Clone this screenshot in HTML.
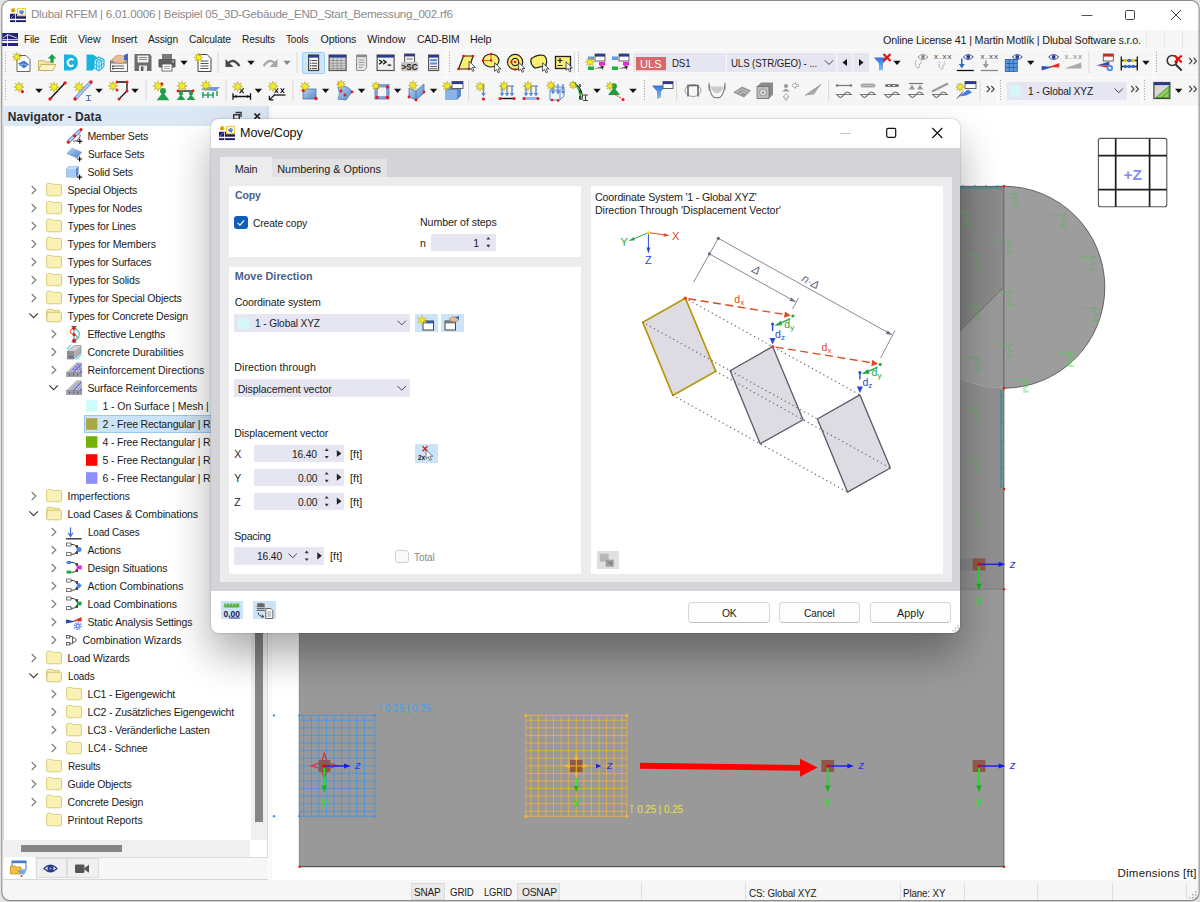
<!DOCTYPE html>
<html><head><meta charset="utf-8"><title>Dlubal RFEM</title>
<style>
html,body{margin:0;padding:0;background:#fff;}
body{width:1200px;height:902px;position:relative;overflow:hidden;font-family:"Liberation Sans",sans-serif;}
.t{position:absolute;white-space:nowrap;line-height:16px;height:16px;transform-origin:0 50%;}
.r{position:absolute;box-sizing:border-box;}
svg{position:absolute;overflow:visible;}
svg text{font-family:"Liberation Sans",sans-serif;}
</style></head><body>
<div class="r" style="left:0.0px;top:0.0px;width:1200.0px;height:30.0px;background:#ffffff;"></div>
<svg style="left:10px;top:7px" width="17" height="16" viewBox="0 0 17 16"><rect x="0" y="6.8" width="16" height="4.9" fill="#1a1a6a"/><rect x="0" y="13.2" width="16" height="1.9" fill="#1a1a6a"/><rect x="5.2" y="6.8" width="0.8" height="8.4" fill="#fff"/><path d="M1 11 L4.6 7.4" stroke="#c8c8e8" stroke-width="0.6"/><circle cx="3.2" cy="3.3" r="2.3" fill="#e4bc1c"/><path d="M3.8 2 Q2.4 2.4 2.6 4 Q3.4 3.2 3.9 4 Q3.6 4.9 2.8 4.4" stroke="#6a5a20" stroke-width="0.5" fill="none"/><rect x="7.6" y="1.5" width="7.7" height="7.2" fill="#fff" stroke="#f5d040" stroke-width="1.2"/><path d="M8.8 4.4 L12 2.8 L14 4.6 L12.6 7.8 L10 6.4 Z" fill="#5a7cc0"/><path d="M10 4.4 L12 3.6 L12.8 5" stroke="#a8c0e8" stroke-width="0.6" fill="none"/></svg>
<span class="t" style="left:31.0px;top:6.1px;font-size:11.60px;color:#8a8a8a;letter-spacing:-0.254px;">Dlubal RFEM | 6.01.0006 | Beispiel 05_3D-Gebäude_END_Start_Bemessung_002.rf6</span>
<svg style="left:1070px;top:5px" width="125" height="22" viewBox="0 0 125 22"><path d="M11.5 10.5 H22.5" stroke="#555" stroke-width="1" fill="none"/><rect x="55.5" y="5.5" width="9" height="9" rx="1.2" fill="none" stroke="#444" stroke-width="1"/><path d="M101 5 L111 15 M111 5 L101 15" stroke="#444" stroke-width="1" fill="none"/></svg>
<div class="r" style="left:0.0px;top:30.0px;width:1200.0px;height:19.0px;background:#f6f6f6;"></div>
<svg style="left:2px;top:33px" width="17" height="13" viewBox="0 0 17 13"><rect x="0" y="0" width="16" height="8" fill="#23237a"/><rect x="0" y="10" width="16" height="3" fill="#23237a"/><path d="M1 5 L5.5 1.5 L5.5 13 M5.5 1.5 L15 5" stroke="#fff" stroke-width="0.8" fill="none"/><rect x="0" y="6.2" width="16" height="1" fill="#fff" opacity="0.9"/></svg>
<span class="t" style="left:23.8px;top:31.2px;font-size:10.70px;color:#1a1a1a;letter-spacing:-0.108px;transform:scaleX(0.9220);">File</span>
<span class="t" style="left:50.0px;top:31.2px;font-size:10.70px;color:#1a1a1a;letter-spacing:-0.115px;transform:scaleX(0.9456);">Edit</span>
<span class="t" style="left:78.0px;top:31.2px;font-size:10.70px;color:#1a1a1a;letter-spacing:-0.125px;">View</span>
<span class="t" style="left:111.5px;top:31.2px;font-size:10.70px;color:#1a1a1a;letter-spacing:-0.210px;">Insert</span>
<span class="t" style="left:148.0px;top:31.2px;font-size:10.70px;color:#1a1a1a;letter-spacing:-0.134px;transform:scaleX(0.9580);">Assign</span>
<span class="t" style="left:189.0px;top:31.2px;font-size:10.70px;color:#1a1a1a;letter-spacing:-0.124px;transform:scaleX(0.9657);">Calculate</span>
<span class="t" style="left:242.0px;top:31.2px;font-size:10.70px;color:#1a1a1a;letter-spacing:-0.127px;transform:scaleX(0.9486);">Results</span>
<span class="t" style="left:286.2px;top:31.2px;font-size:10.70px;color:#1a1a1a;letter-spacing:-0.125px;transform:scaleX(0.9238);">Tools</span>
<span class="t" style="left:320.5px;top:31.2px;font-size:10.70px;color:#1a1a1a;letter-spacing:-0.161px;">Options</span>
<span class="t" style="left:367.2px;top:31.2px;font-size:10.70px;color:#1a1a1a;letter-spacing:0.074px;">Window</span>
<span class="t" style="left:416.5px;top:31.2px;font-size:10.70px;color:#1a1a1a;letter-spacing:-0.161px;transform:scaleX(0.9648);">CAD-BIM</span>
<span class="t" style="left:470.0px;top:31.2px;font-size:10.70px;color:#1a1a1a;letter-spacing:-0.189px;">Help</span>
<span class="t" style="left:883.0px;top:31.5px;font-size:10.80px;color:#1a1a1a;letter-spacing:-0.182px;">Online License 41 | Martin Motlík | Dlubal Software s.r.o.</span>
<div class="r" style="left:1146.3px;top:31.0px;width:1.0px;height:17.0px;background:#e6e6e6;"></div>
<div class="r" style="left:1164.0px;top:31.0px;width:1.0px;height:17.0px;background:#e6e6e6;"></div>
<div class="r" style="left:1182.0px;top:31.0px;width:1.0px;height:17.0px;background:#e6e6e6;"></div>
<div class="r" style="left:0.0px;top:49.0px;width:1200.0px;height:56.5px;background:#f6f6f6;"></div>
<div class="r" style="left:0.0px;top:48.6px;width:1200.0px;height:0.8px;background:#fcfcfc;"></div>
<div class="r" style="left:0.0px;top:76.6px;width:1200.0px;height:0.8px;background:#fdfdfd;"></div>
<div class="r" style="left:446.0px;top:49.0px;width:1.0px;height:28.0px;background:#ffffff;"></div>
<div class="r" style="left:575.5px;top:49.0px;width:1.0px;height:28.0px;background:#ffffff;"></div>
<div class="r" style="left:1153.0px;top:49.0px;width:1.0px;height:28.0px;background:#ffffff;"></div>
<div class="r" style="left:640.5px;top:77.0px;width:1.0px;height:28.5px;background:#ffffff;"></div>
<div class="r" style="left:997.0px;top:77.0px;width:1.0px;height:28.5px;background:#ffffff;"></div>
<div class="r" style="left:1141.0px;top:77.0px;width:1.0px;height:28.5px;background:#ffffff;"></div>
<svg style="left:0;top:0" width="1200" height="106" viewBox="0 0 1200 106">
<defs><linearGradient id="gb" x1="0" x2="1" y1="0" y2="1"><stop offset="0" stop-color="#b8d4f4"/><stop offset="1" stop-color="#5a88c6"/></linearGradient><linearGradient id="gf" x1="0" x2="0" y1="0" y2="1"><stop offset="0" stop-color="#2f74d8"/><stop offset="1" stop-color="#8cc0f4"/></linearGradient></defs>
<path d="M5.5 52.0 v21" stroke="#a4a4a4" stroke-width="1" stroke-dasharray="1 1.7"/>
<g transform="translate(22.0,62.5)"><path d="M-5 -7 H4 L8 -3 V9 H-5 Z" fill="#fff" stroke="#555" stroke-width="0.9"/><path d="M-4 1 L2 -2 L7 2 L2 6 Z" fill="#4a78c8"/><path d="M-3 3 Q1 0 6 3" stroke="#9ab8e8" fill="none" stroke-width="1"/></g><polygon points="17.0,52.4 17.8,55.1 20.3,53.7 18.9,56.2 21.6,57.0 18.9,57.8 20.3,60.3 17.8,58.9 17.0,61.6 16.2,58.9 13.7,60.3 15.1,57.8 12.4,57.0 15.1,56.2 13.7,53.7 16.2,55.1" fill="#f6ee1e" stroke="#a89818" stroke-width="0.5"/>
<g transform="translate(47.0,62.5)"><path d="M-8.5 -2 H-3 L-1.5 -0.5 H6 V8 H-8.5 Z" fill="#f2e6a0" stroke="#b8a858" stroke-width="0.8"/><path d="M-6 2 H9 L6 8 H-8.5 Z" fill="#faf2c0" stroke="#b8a858" stroke-width="0.8"/><path d="M5 -8.5 l4.2 4.5 h-2.6 v4 h-3.2 v-4 h-2.6 Z" fill="#18a048"/></g>
<g transform="translate(70.0,62.5)"><path d="M-6 -8 H0 A8 8 0 0 1 0 8 H-6 Z" fill="#18b4e0"/><path d="M3.5 -2.4 A3.4 3.4 0 1 0 3.5 2.6" fill="none" stroke="#fff" stroke-width="2"/></g>
<g transform="translate(95.0,62.5)"><path d="M-8.5 -8 H-3 A8 8 0 0 1 3 -2 L-2 8 H-8.5 Z" fill="#18b4e0"/><path d="M-1 -3 L4 -5.5 L9 -3 V4 L4 8.5 L-1 5.5 Z" fill="#c8f0fa" stroke="#18a8d8" stroke-width="1"/><path d="M-1 -3 L4 0 L9 -3 M4 0 V8.5 M-1 1.2 L4 4.2 L9 0.6 M1.5 -4.2 L6.5 -1.4 V6.2 M6.5 -4.2 L1.5 -1.4 V7" stroke="#18a8d8" stroke-width="0.8" fill="none"/></g>
<g transform="translate(119.0,62.5)"><rect x="-8.5" y="-1.5" width="17" height="10.5" fill="#f4f4f4" stroke="#555" stroke-width="0.9"/><rect x="-8.5" y="-1.5" width="17" height="2.6" fill="#888"/><path d="M-5 3.5 h10 M-5 6 h10" stroke="#666" stroke-width="1.2"/><rect x="-7" y="3" width="2" height="1.4" fill="#444"/><rect x="-7" y="5.4" width="2" height="1.4" fill="#444"/><path d="M-7 -3 Q-3 -8.5 3 -7 L8 -5 L8 -1 L2 1 L-5 0 Z" fill="#e8bc98" stroke="#a87850" stroke-width="0.5"/><path d="M5 -7.5 L9 -9 V-1.5 L5 -2.5 Z" fill="#3a68c0"/></g>
<g transform="translate(143.0,62.5)"><path d="M-8.5 -8.5 H6.5 L8.5 -6.5 V8.5 H-8.5 Z" fill="#6c6c6c"/><rect x="-5.5" y="-7" width="11" height="7" fill="#f0f0f0"/><path d="M-4 -5 h8 M-4 -3 h8" stroke="#888" stroke-width="1"/><rect x="-4" y="3" width="8" height="5.5" fill="#e8e8e8"/><rect x="-2" y="4" width="2.4" height="4.5" fill="#555"/></g>
<g transform="translate(167.0,62.5)"><rect x="-5" y="-8.5" width="10" height="5" fill="#7a7a7a"/><rect x="-8.5" y="-3.5" width="17" height="8.5" rx="1" fill="#5e5e5e"/><rect x="-5" y="1.5" width="10" height="7" fill="#fff" stroke="#5e5e5e" stroke-width="0.9"/><path d="M-3 4 h6 M-3 6 h6" stroke="#888" stroke-width="0.8"/><circle cx="6" cy="-1" r="0.9" fill="#ddd"/></g>
<path d="M180.3 60.7 h7.4 l-3.7 4.3 Z" fill="#111"/>
<g transform="translate(203.0,62.5)"><path d="M-5 -8 H4 L8 -4 V9 H-5 Z" fill="#fff" stroke="#444" stroke-width="1"/><path d="M-2.5 -1.5 h8 M-2.5 1 h8 M-2.5 3.5 h8 M-2.5 6 h8" stroke="#555" stroke-width="1"/></g><polygon points="198.5,52.9 199.3,55.6 201.8,54.2 200.4,56.7 203.1,57.5 200.4,58.3 201.8,60.8 199.3,59.4 198.5,62.1 197.7,59.4 195.2,60.8 196.6,58.3 193.9,57.5 196.6,56.7 195.2,54.2 197.7,55.6" fill="#f6ee1e" stroke="#a89818" stroke-width="0.5"/>
<path d="M218.0 52.0 v21" stroke="#dadada" stroke-width="1"/>
<g transform="translate(233.0,62.5)"><path d="M-5.5 1.5 Q0 -5.5 6.5 3.5" fill="none" stroke="#4a4a4a" stroke-width="2.3"/><path d="M-7.5 -3.5 v8 h8 Z" fill="#4a4a4a"/></g>
<path d="M247.3 60.7 h7.4 l-3.7 4.3 Z" fill="#111"/>
<g transform="translate(270.0,62.5)"><path d="M5.5 1.5 Q0 -5.5 -6.5 3.5" fill="none" stroke="#a8a8a8" stroke-width="2.3"/><path d="M7.5 -3.5 v8 h-8 Z" fill="#a8a8a8"/></g>
<path d="M283.3 60.7 h7.4 l-3.7 4.3 Z" fill="#888"/>
<path d="M297.0 52.0 v21" stroke="#dadada" stroke-width="1"/>
<rect x="302.5" y="52.5" width="22" height="21" rx="2" fill="#cfe6fa" stroke="#9cccf4" stroke-width="1"/>
<g transform="translate(313.6,62.5)"><rect x="-5" y="-7.5" width="10" height="15.5" fill="#f4f4f4" stroke="#444" stroke-width="1.2"/><rect x="-5" y="-7.5" width="10" height="2.6" fill="#2a3a90"/><path d="M-2 -2 h5.5 M-2 0.7 h5.5 M-2 3.4 h5.5 M-2 6 h5.5" stroke="#555" stroke-width="1.1"/><path d="M-3.6 -2 h0.9 M-3.6 0.7 h0.9 M-3.6 3.4 h0.9 M-3.6 6 h0.9" stroke="#222" stroke-width="1.1"/></g>
<g transform="translate(337.6,62.5)"><rect x="-8.5" y="-7.5" width="17" height="15.5" fill="#d4d4d4" stroke="#555" stroke-width="1.2"/><rect x="-8.5" y="-7.5" width="17" height="2.6" fill="#2a3a90"/><path d="M-8 -2 h16 M-8 0.7 h16 M-8 3.4 h16 M-8 6 h16 M-4.5 -4.5 v12 M-0.5 -4.5 v12 M3.5 -4.5 v12" stroke="#8a8a8a" stroke-width="0.8"/></g>
<g transform="translate(361.6,62.5)"><path d="M-5 -7.5 H5 V5 L2.5 8 H-5 Z" fill="#e8e8e8" stroke="#8a8a8a" stroke-width="1"/><rect x="-5" y="-7.5" width="10" height="2.2" fill="#8a8a8a"/><path d="M-3 -2.5 h6 M-3 0 h6 M-3 2.5 h6 M-3 5 h4" stroke="#999" stroke-width="1"/></g>
<g transform="translate(385.6,62.5)"><rect x="-8.5" y="-7.5" width="17" height="15.5" fill="#f0f0f0" stroke="#555" stroke-width="1.2"/><rect x="-8.5" y="-7.5" width="17" height="2.6" fill="#2a3a90"/><path d="M-6.5 -2.6 l3 2.2 l-3 2.2 M-2.5 -2.6 l3 2.2 l-3 2.2 M2 2.6 h3.6" fill="none" stroke="#111" stroke-width="1.3"/></g>
<g transform="translate(409.6,62.5)"><rect x="-5" y="-8.5" width="10" height="10" fill="#f0f0f0" stroke="#555" stroke-width="1"/><rect x="-5" y="-8.5" width="10" height="2.4" fill="#2a3a90"/><path d="M-3 -3.5 h6" stroke="#777" stroke-width="1"/><rect x="-8.8" y="-0.6" width="17.6" height="9.4" rx="2.2" fill="#c6c6c6"/><text x="-8" y="7.4" font-size="9.4" font-weight="bold" fill="#1a1a1a" textLength="16" lengthAdjust="spacingAndGlyphs">&gt;SC</text></g>
<g transform="translate(433.6,62.5)"><rect x="-5" y="-7.5" width="10" height="15.5" fill="#f4f4f4" stroke="#555" stroke-width="1.2"/><rect x="-5" y="-7.5" width="10" height="2.6" fill="#2a3a90"/><rect x="-3.5" y="-3.3" width="7" height="2" fill="#5a8ad8"/><rect x="-3.5" y="0" width="7" height="2" fill="#5a8ad8"/><path d="M-3.5 4 h7 M-3.5 6.2 h7" stroke="#666" stroke-width="1"/></g>
<path d="M449.5 52.0 v21" stroke="#a4a4a4" stroke-width="1" stroke-dasharray="1 1.7"/>
<g transform="translate(467.0,62.5)"><path d="M-3.5 -6.5 H6 L2 6.5 H-8.5 Z" fill="#f8ee70" stroke="#222" stroke-width="1.2"/><circle cx="-3.5" cy="-6.5" r="1.3" fill="#e81818"/><circle cx="6.0" cy="-6.5" r="1.3" fill="#e81818"/><circle cx="-8.5" cy="6.5" r="1.3" fill="#e81818"/><circle cx="2.0" cy="6.5" r="1.3" fill="#e81818"/><path d="M2.1 -1.1 v8.4 l2 -1.8 l1.5 3.3 l1.5 -0.7 l-1.5 -3.2 h2.8 Z" fill="#fff" stroke="#222" stroke-width="0.75"/></g>
<g transform="translate(491.0,62.5)"><ellipse cx="0" cy="-2" rx="8" ry="6.5" fill="#f8ee70" stroke="#222" stroke-width="1.2"/><path d="M-7 -2 h7 M0 -8 v7" stroke="#e81818" stroke-width="0.7"/><circle cx="-8.0" cy="-2.0" r="1.2" fill="#e81818"/><circle cx="0.0" cy="-8.5" r="1.2" fill="#e81818"/><circle cx="0.0" cy="-2.0" r="1.2" fill="#e81818"/><path d="M3.6 0.4 v8.4 l2 -1.8 l1.5 3.3 l1.5 -0.7 l-1.5 -3.2 h2.8 Z" fill="#fff" stroke="#222" stroke-width="0.75"/></g>
<g transform="translate(515.6,62.5)"><circle cx="-0.5" cy="-0.5" r="7.6" fill="#f8ee70" stroke="#222" stroke-width="1.2"/><circle cx="-0.5" cy="-0.5" r="3.6" fill="#f8ee70" stroke="#222" stroke-width="1.1"/><circle cx="-4.3" cy="-0.5" r="1.2" fill="#e81818"/><circle cx="-0.5" cy="-0.5" r="1.2" fill="#e81818"/><circle cx="-0.5" cy="7.0" r="1.2" fill="#e81818"/><path d="M3.1 -0.1 v8.4 l2 -1.8 l1.5 3.3 l1.5 -0.7 l-1.5 -3.2 h2.8 Z" fill="#fff" stroke="#222" stroke-width="0.75"/></g>
<g transform="translate(539.0,62.5)"><path d="M-8 -3.5 Q-2 -8.5 5 -7 Q9 -4 7 3 L-4 5.5 Q-9 2 -8 -3.5 Z" fill="#f8ee70" stroke="#222" stroke-width="1.2"/><path d="M3.6 0.4 v8.4 l2 -1.8 l1.5 3.3 l1.5 -0.7 l-1.5 -3.2 h2.8 Z" fill="#fff" stroke="#222" stroke-width="0.75"/></g>
<g transform="translate(563.0,62.5)"><rect x="-7.5" y="-6" width="15" height="12" fill="#f8ee70" stroke="#222" stroke-width="1.3"/><path d="M-5.5 -2 h5 M-3 -4.5 v5 M-5.5 3 h5" stroke="#222" stroke-width="1.2"/><path d="M3.1 -0.6 v8.4 l2 -1.8 l1.5 3.3 l1.5 -0.7 l-1.5 -3.2 h2.8 Z" fill="#fff" stroke="#222" stroke-width="0.75"/></g>
<path d="M574.4 52.0 v21" stroke="#dadada" stroke-width="1"/>
<path d="M578.5 52.0 v21" stroke="#a4a4a4" stroke-width="1" stroke-dasharray="1 1.7"/>
<g transform="translate(596.0,62.5)"><rect x="-8" y="-6" width="6" height="3.5" fill="#5a9af0"/><rect x="-8" y="4" width="6" height="3.5" fill="#20b040"/><rect x="3" y="-0.5" width="6" height="3.5" fill="#f020e0"/><path d="M-2 6 L5 4.5 L4 3 L8 3.5 L6.5 7.5 L5.8 5.8 Z" fill="#333"/><rect x="-1.0" y="-8.5" width="10.0" height="7.0" fill="#fff" stroke="#555" stroke-width="0.9"/><rect x="-1.0" y="-8.5" width="10.0" height="2.6" fill="#2a3a90"/></g>
<polygon points="590.0,57.4 590.8,60.1 593.3,58.7 591.9,61.2 594.6,62.0 591.9,62.8 593.3,65.3 590.8,63.9 590.0,66.6 589.2,63.9 586.7,65.3 588.1,62.8 585.4,62.0 588.1,61.2 586.7,58.7 589.2,60.1" fill="#f6ee1e" stroke="#a89818" stroke-width="0.5"/>
<g transform="translate(620.0,62.5)"><rect x="-8" y="-6" width="6" height="3.5" fill="#5a9af0"/><rect x="-8" y="4" width="6" height="3.5" fill="#20b040"/><rect x="3" y="-0.5" width="6" height="3.5" fill="#f020e0"/><path d="M-2 6 L5 4.5 L4 3 L8 3.5 L6.5 7.5 L5.8 5.8 Z" fill="#333"/><rect x="-1.0" y="-8.5" width="10.0" height="7.0" fill="#fff" stroke="#555" stroke-width="0.9"/><rect x="-1.0" y="-8.5" width="10.0" height="2.6" fill="#2a3a90"/></g>
<rect x="633" y="53" width="203" height="19" fill="#e6e6f2"/>
<rect x="636" y="57" width="30" height="13.2" fill="#d46a6a"/>
<path d="M726.4 54 v17" stroke="#f6f6fb" stroke-width="1.2"/>
<path d="M824.8 60.3 l4.2 4.2 l4.2 -4.2" fill="none" stroke="#444" stroke-width="1"/>
<rect x="837.2" y="53" width="15" height="19" fill="#e6e6f2"/><rect x="853.2" y="53" width="15.8" height="19" fill="#e6e6f2"/>
<path d="M847 59 v7 l-4.6 -3.5 Z" fill="#111"/><path d="M859 59 v7 l4.6 -3.5 Z" fill="#111"/>
<g transform="translate(882.0,62.5)"><path d="M-8 -5 H6 L1 1 V7 L-3 8.5 V1 Z" fill="url(#gf)"/><path d="M1.5 -8.5 l7 7 M8.5 -8.5 l-7 7" stroke="#e81010" stroke-width="2.2"/></g>
<path d="M893.3 60.7 h7.4 l-3.7 4.3 Z" fill="#111"/>
<g transform="translate(920.0,62.5)"><path d="M-2.0 -5.5 q5 -5 10 0 q-5 5 -10 0 Z" fill="#fff" stroke="#888" stroke-width="0.9"/><circle cx="3.0" cy="-5.5" r="1.9" fill="#888"/><path d="M-4 -2 q-2 5 2 8 q2 -1 1 -4 q3 -1 2 -4" fill="none" stroke="#888" stroke-width="0.9" stroke-dasharray="1.5 1"/></g>
<g transform="translate(942.7,62.5)"><text x="-8.7" y="-3.5" font-size="8" fill="#444" textLength="17.5" lengthAdjust="spacing">x.xx</text><path d="M-3 -1 q-2 5 2 8 q2 -1 1 -4 q3 -1 2 -4" fill="none" stroke="#888" stroke-width="0.9" stroke-dasharray="1.5 1"/></g>
<g transform="translate(965.3,62.5)"><path d="M-2.0 -5.5 q5 -5 10 0 q-5 5 -10 0 Z" fill="#fff" stroke="#2a3a90" stroke-width="0.9"/><circle cx="3.0" cy="-5.5" r="1.9" fill="#2a3a90"/><path d="M-3.5 -4 v8" stroke="#3a6ac8" stroke-width="1.6"/><path d="M-6.5 1.5 h6 l-3 4.5 Z" fill="#3a6ac8"/><path d="M-8.5 8 h17" stroke="#111" stroke-width="1.3"/></g>
<g transform="translate(989.3,62.5)"><text x="-8.7" y="-3.5" font-size="8" fill="#444" textLength="17.5" lengthAdjust="spacing">x.xx</text><path d="M-3.5 -2 v6" stroke="#999" stroke-width="1.6"/><path d="M-6.5 1.5 h6 l-3 4.5 Z" fill="#999"/><path d="M-8.5 8 h17" stroke="#888" stroke-width="1.3"/></g>
<g transform="translate(1013.3,62.5)"><rect x="-8" y="-3" width="12" height="12" fill="#5a9ae0" stroke="#2a5aa8" stroke-width="0.8"/><path d="M-8 1 h12 M-8 5 h12 M-4 -3 v12 M0 -3 v12" stroke="#2a5aa8" stroke-width="0.8"/><path d="M-1.0 -5.5 q5 -5 10 0 q-5 5 -10 0 Z" fill="#fff" stroke="#2a3a90" stroke-width="0.9"/><circle cx="4.0" cy="-5.5" r="1.9" fill="#2a3a90"/></g>
<path d="M1027.0 60.7 h7.4 l-3.7 4.3 Z" fill="#111"/>
<g transform="translate(1050.7,62.5)"><path d="M-2.0 -5.5 q5 -5 10 0 q-5 5 -10 0 Z" fill="#fff" stroke="#2a3a90" stroke-width="0.9"/><circle cx="3.0" cy="-5.5" r="1.9" fill="#2a3a90"/><path d="M-9 3.4 L2 4.6 L-9 8 Z" fill="#2a50b0"/><path d="M-2 4.4 L8.6 0.6 V5 Z" fill="#e03020"/></g>
<g transform="translate(1073.3,62.5)"><text x="-8.7" y="-3.5" font-size="8" fill="#888" textLength="17.5" lengthAdjust="spacing">x.xx</text><path d="M-9 6 L8 0 V6 Z" fill="#aaa"/></g>
<path d="M1088.8 52.0 v21" stroke="#dadada" stroke-width="1"/>
<g transform="translate(1105.3,62.5)"><rect x="-2.0" y="-8.5" width="10.0" height="7.0" fill="#fff" stroke="#555" stroke-width="0.9"/><rect x="-2.0" y="-8.5" width="10.0" height="2.6" fill="#e02020"/><path d="M-9 3 L4 -1 V3 Z" fill="#2a50b0"/><path d="M-9 3 L4 3 V5.5 Z" fill="#e02020"/><circle cx="4.5" cy="5.5" r="3.2" fill="#5a8ae8"/><circle cx="4.5" cy="5.5" r="1.2" fill="#fff"/></g>
<g transform="translate(1129.3,62.5)"><path d="M-8 -6 v14 M8 -6 v14 M-8 -2 h16 M-8 4 h16" stroke="#222" stroke-width="1.4"/><circle cx="-4" cy="-2" r="1.8" fill="#e8c020"/><circle cx="0" cy="-2" r="1.8" fill="#3a6ac8"/><circle cx="4" cy="-2" r="1.8" fill="#e8c020"/><circle cx="-4" cy="4" r="1.8" fill="#3a6ac8"/><circle cx="0" cy="4" r="1.8" fill="#3a6ac8"/><circle cx="4" cy="4" r="1.8" fill="#3a6ac8"/></g>
<path d="M1142.2 60.7 h7.4 l-3.7 4.3 Z" fill="#111"/>
<path d="M1156.5 52.0 v21" stroke="#a4a4a4" stroke-width="1" stroke-dasharray="1 1.7"/>
<g transform="translate(1174.7,62.5)"><circle cx="-2.5" cy="-2" r="5" fill="none" stroke="#333" stroke-width="1.6"/><path d="M1 2 L7 8" stroke="#333" stroke-width="2"/><path d="M0 -7 l7 7 M7 -7 l-7 7" stroke="#e81010" stroke-width="2.2"/></g>
<path d="M1189.2 57.8 l2.8 3.2 l-2.8 3.2 M1193.6 57.8 l2.8 3.2 l-2.8 3.2" fill="none" stroke="#444" stroke-width="1.2"/>
<path d="M5.5 80.0 v21" stroke="#a4a4a4" stroke-width="1" stroke-dasharray="1 1.7"/>
<polygon points="19.0,81.8 19.9,84.8 22.7,83.3 21.2,86.1 24.2,87.0 21.2,87.9 22.7,90.7 19.9,89.2 19.0,92.2 18.1,89.2 15.3,90.7 16.8,87.9 13.8,87.0 16.8,86.1 15.3,83.3 18.1,84.8" fill="#f6ee1e" stroke="#a89818" stroke-width="0.5"/><circle cx="22.4" cy="91.6" r="1.6" fill="#e81818"/>
<path d="M35.3 88.7 h7.4 l-3.7 4.3 Z" fill="#111"/>
<path d="M50 99 L65 83" stroke="#111" stroke-width="1.5"/><circle cx="50.0" cy="99.0" r="1.7" fill="#e81818"/><circle cx="65.0" cy="83.0" r="1.7" fill="#e81818"/><polygon points="54.0,81.8 54.9,84.8 57.7,83.3 56.2,86.1 59.2,87.0 56.2,87.9 57.7,90.7 54.9,89.2 54.0,92.2 53.1,89.2 50.3,90.7 51.8,87.9 48.8,87.0 51.8,86.1 50.3,83.3 53.1,84.8" fill="#f6ee1e" stroke="#a89818" stroke-width="0.5"/>
<path d="M75 99 L91 82" stroke="#7a9ad8" stroke-width="3.6"/><path d="M75 99 L91 82" stroke="#c0d0f0" stroke-width="1.4"/><circle cx="75.0" cy="99.0" r="1.7" fill="#e81818"/><circle cx="91.0" cy="82.0" r="1.7" fill="#e81818"/><polygon points="79.0,81.8 79.9,84.8 82.7,83.3 81.2,86.1 84.2,87.0 81.2,87.9 82.7,90.7 79.9,89.2 79.0,92.2 78.1,89.2 75.3,90.7 76.8,87.9 73.8,87.0 76.8,86.1 75.3,83.3 78.1,84.8" fill="#f6ee1e" stroke="#a89818" stroke-width="0.5"/><path d="M86 95.5 h5 M86 100.5 h5 M88.5 95.5 v5" stroke="#5a7ac0" stroke-width="1.2"/>
<path d="M95.3 88.7 h7.4 l-3.7 4.3 Z" fill="#111"/>
<path d="M117 82 H127 V91 L119 99" fill="none" stroke="#111" stroke-width="1.3"/><circle cx="117.0" cy="82.0" r="1.5" fill="#e81818"/><circle cx="127.0" cy="82.0" r="1.5" fill="#e81818"/><circle cx="127.0" cy="91.0" r="1.5" fill="#e81818"/><circle cx="119.0" cy="99.0" r="1.5" fill="#e81818"/><circle cx="117.0" cy="90.0" r="1.5" fill="#e81818"/><polygon points="113.0,81.2 113.8,84.0 116.4,82.6 115.0,85.2 117.8,86.0 115.0,86.8 116.4,89.4 113.8,88.0 113.0,90.8 112.2,88.0 109.6,89.4 111.0,86.8 108.2,86.0 111.0,85.2 109.6,82.6 112.2,84.0" fill="#f6ee1e" stroke="#a89818" stroke-width="0.5"/>
<path d="M131.3 88.7 h7.4 l-3.7 4.3 Z" fill="#111"/>
<path d="M146.0 80.0 v21" stroke="#dadada" stroke-width="1"/>
<g transform="translate(163.0,94.5) scale(1.15)"><circle cx="0" cy="-3" r="2.6" fill="#1ea048"/><path d="M0 -2 L5.5 5 H-5.5 Z" fill="#1ea048"/></g><polygon points="158.0,80.8 158.9,83.8 161.7,82.3 160.2,85.1 163.2,86.0 160.2,86.9 161.7,89.7 158.9,88.2 158.0,91.2 157.1,88.2 154.3,89.7 155.8,86.9 152.8,86.0 155.8,85.1 154.3,82.3 157.1,83.8" fill="#f6ee1e" stroke="#a89818" stroke-width="0.5"/><circle cx="162.0" cy="84.0" r="1.4" fill="#e81818"/>
<path d="M178 91 h15" stroke="#111" stroke-width="1.3"/><g transform="translate(181.0,96.0) scale(0.80)"><circle cx="0" cy="-3" r="2.6" fill="#1ea048"/><path d="M0 -2 L5.5 5 H-5.5 Z" fill="#1ea048"/></g><g transform="translate(191.0,96.0) scale(0.80)"><circle cx="0" cy="-3" r="2.6" fill="#1ea048"/><path d="M0 -2 L5.5 5 H-5.5 Z" fill="#1ea048"/></g><circle cx="178.0" cy="91.0" r="1.4" fill="#e81818"/><circle cx="193.0" cy="91.0" r="1.4" fill="#e81818"/><polygon points="182.0,80.8 182.9,83.8 185.7,82.3 184.2,85.1 187.2,86.0 184.2,86.9 185.7,89.7 182.9,88.2 182.0,91.2 181.1,88.2 178.3,89.7 179.8,86.9 176.8,86.0 179.8,85.1 178.3,82.3 181.1,83.8" fill="#f6ee1e" stroke="#a89818" stroke-width="0.5"/>
<path d="M201 90 L206 87 H220 L216 91 Z" fill="#6a9ad8"/><path d="M203 92 v6 M208 92 v6 M213 92 v6 M217 91 v5 M202 95 h12" stroke="#30a868" stroke-width="1.6"/><polygon points="206.0,80.3 206.9,83.3 209.7,81.8 208.2,84.6 211.2,85.5 208.2,86.4 209.7,89.2 206.9,87.7 206.0,90.7 205.1,87.7 202.3,89.2 203.8,86.4 200.8,85.5 203.8,84.6 202.3,81.8 205.1,83.3" fill="#f6ee1e" stroke="#a89818" stroke-width="0.5"/>
<path d="M226.0 80.0 v21" stroke="#dadada" stroke-width="1"/>
<path d="M233 93.3 v6.4 M250.5 93.3 v6.4 M233 96.5 h17.5" stroke="#111" stroke-width="1.3"/><path d="M233.6 96.5 l3 -1.6 v3.2 Z M249.9 96.5 l-3 -1.6 v3.2 Z" fill="#111"/><path d="M239.6 88.4 l4 4.8 M243.6 88.4 l-4 4.8" stroke="#111" stroke-width="1.1"/><polygon points="237.6,81.4 238.5,84.4 241.3,82.9 239.8,85.7 242.8,86.6 239.8,87.5 241.3,90.3 238.5,88.8 237.6,91.8 236.7,88.8 233.9,90.3 235.4,87.5 232.4,86.6 235.4,85.7 233.9,82.9 236.7,84.4" fill="#f6ee1e" stroke="#a89818" stroke-width="0.5"/>
<path d="M254.7 88.7 h7.4 l-3.7 4.3 Z" fill="#111"/>
<path d="M273.5 95 h12" stroke="#111" stroke-width="1.3"/><path d="M274.5 95 l-5 4.6 M269.3 99.8 h4 M269.3 99.8 v-4" stroke="#111" stroke-width="1.2" fill="none"/><path d="M274.6 88.4 l3.6 4.6 M278.2 88.4 l-3.6 4.6 M280.6 88.4 l3.6 4.6 M284.2 88.4 l-3.6 4.6" stroke="#111" stroke-width="1.1"/><polygon points="273.0,81.2 273.9,84.2 276.7,82.7 275.2,85.5 278.2,86.4 275.2,87.3 276.7,90.1 273.9,88.6 273.0,91.6 272.1,88.6 269.3,90.1 270.8,87.3 267.8,86.4 270.8,85.5 269.3,82.7 272.1,84.2" fill="#f6ee1e" stroke="#a89818" stroke-width="0.5"/>
<path d="M293.0 80.0 v21" stroke="#dadada" stroke-width="1"/>
<rect x="303" y="89" width="13" height="10" fill="url(#gb)" stroke="#3a6ab0" stroke-width="0.7"/><circle cx="303.5" cy="90.5" r="1.7" fill="#e81818"/><circle cx="316.0" cy="98.5" r="1.7" fill="#e81818"/><polygon points="305.0,81.5 305.9,84.4 308.5,83.0 307.1,85.6 310.0,86.5 307.1,87.4 308.5,90.0 305.9,88.6 305.0,91.5 304.1,88.6 301.5,90.0 302.9,87.4 300.0,86.5 302.9,85.6 301.5,83.0 304.1,84.4" fill="#f6ee1e" stroke="#a89818" stroke-width="0.5"/>
<path d="M321.9 88.7 h7.4 l-3.7 4.3 Z" fill="#111"/>
<path d="M338 87 Q348 84 352 92 Q348 97 346 100 L338 99 Q341 94 338 87 Z" fill="url(#gb)" stroke="#3a6ab0" stroke-width="0.7"/><circle cx="339.0" cy="84.0" r="1.4" fill="#e81818"/><circle cx="341.0" cy="91.0" r="1.4" fill="#e81818"/><circle cx="345.0" cy="95.0" r="1.4" fill="#e81818"/><circle cx="352.0" cy="92.0" r="1.4" fill="#e81818"/><polygon points="341.0,79.9 341.8,82.6 344.3,81.2 342.9,83.7 345.6,84.5 342.9,85.3 344.3,87.8 341.8,86.4 341.0,89.1 340.2,86.4 337.7,87.8 339.1,85.3 336.4,84.5 339.1,83.7 337.7,81.2 340.2,82.6" fill="#f6ee1e" stroke="#a89818" stroke-width="0.5"/>
<path d="M357.9 88.7 h7.4 l-3.7 4.3 Z" fill="#111"/>
<rect x="376.4" y="86" width="11.2" height="11.6" fill="none" stroke="#7aa2d8" stroke-width="3"/><rect x="374.9" y="84.5" width="14.2" height="14.6" fill="none" stroke="#4a74b4" stroke-width="0.5"/><circle cx="377.0" cy="87.0" r="1.7" fill="#e81818"/><circle cx="387.4" cy="87.0" r="1.7" fill="#e81818"/><circle cx="377.0" cy="97.4" r="1.7" fill="#e81818"/><circle cx="387.4" cy="97.4" r="1.7" fill="#e81818"/><polygon points="376.0,81.6 376.8,84.2 379.1,82.9 377.8,85.2 380.4,86.0 377.8,86.8 379.1,89.1 376.8,87.8 376.0,90.4 375.2,87.8 372.9,89.1 374.2,86.8 371.6,86.0 374.2,85.2 372.9,82.9 375.2,84.2" fill="#f6ee1e" stroke="#a89818" stroke-width="0.5"/>
<path d="M393.9 88.7 h7.4 l-3.7 4.3 Z" fill="#111"/>
<path d="M409 88 L416 91 L424 84 V93 L416 100 L409 97 Z" fill="url(#gb)" stroke="#3a6ab0" stroke-width="0.7"/><path d="M416 91 V100" stroke="#3a6ab0" stroke-width="0.7"/><circle cx="409.0" cy="97.0" r="1.4" fill="#e81818"/><circle cx="416.0" cy="100.0" r="1.4" fill="#e81818"/><circle cx="424.0" cy="92.0" r="1.4" fill="#e81818"/><polygon points="413.0,80.7 413.8,83.5 416.4,82.1 415.0,84.7 417.8,85.5 415.0,86.3 416.4,88.9 413.8,87.5 413.0,90.3 412.2,87.5 409.6,88.9 411.0,86.3 408.2,85.5 411.0,84.7 409.6,82.1 412.2,83.5" fill="#f6ee1e" stroke="#a89818" stroke-width="0.5"/>
<path d="M429.9 88.7 h7.4 l-3.7 4.3 Z" fill="#111"/>
<path d="M445 90 L449 86 H461 V96 L457 100 H445 Z" fill="#5a8ad0"/><rect x="445" y="90" width="12" height="10" fill="#8ab4e8"/><g transform="translate(453.0,90.5)"><rect x="-1.0" y="-9.0" width="11.0" height="7.0" fill="#fff" stroke="#555" stroke-width="0.9"/><rect x="-1.0" y="-9.0" width="11.0" height="2.6" fill="#2a3a90"/></g><polygon points="447.0,81.2 447.8,84.0 450.4,82.6 449.0,85.2 451.8,86.0 449.0,86.8 450.4,89.4 447.8,88.0 447.0,90.8 446.2,88.0 443.6,89.4 445.0,86.8 442.2,86.0 445.0,85.2 443.6,82.6 446.2,84.0" fill="#f6ee1e" stroke="#a89818" stroke-width="0.5"/>
<path d="M468.6 80.0 v21" stroke="#dadada" stroke-width="1"/>
<path d="M483.5 84.0 V94.0" stroke="#5a8ad0" stroke-width="1.4"/><path d="M481.3 93.0 h4.4 l-2.2 3.4 Z" fill="#5a8ad0"/><circle cx="483.5" cy="99.0" r="1.6" fill="#e81818"/><polygon points="480.0,81.7 480.8,84.5 483.4,83.1 482.0,85.7 484.8,86.5 482.0,87.3 483.4,89.9 480.8,88.5 480.0,91.3 479.2,88.5 476.6,89.9 478.0,87.3 475.2,86.5 478.0,85.7 476.6,83.1 479.2,84.5" fill="#f6ee1e" stroke="#a89818" stroke-width="0.5"/>
<path d="M500 86 h14" stroke="#5a8ad0" stroke-width="1.2"/><path d="M502.0 86.0 V94.0" stroke="#5a8ad0" stroke-width="1.4"/><path d="M499.8 93.0 h4.4 l-2.2 3.4 Z" fill="#5a8ad0"/><path d="M507.0 86.0 V94.0" stroke="#5a8ad0" stroke-width="1.4"/><path d="M504.8 93.0 h4.4 l-2.2 3.4 Z" fill="#5a8ad0"/><path d="M512.0 86.0 V94.0" stroke="#5a8ad0" stroke-width="1.4"/><path d="M509.8 93.0 h4.4 l-2.2 3.4 Z" fill="#5a8ad0"/><path d="M500 98.5 h14" stroke="#111" stroke-width="1.4"/><circle cx="500.0" cy="98.5" r="1.5" fill="#e81818"/><circle cx="514.0" cy="98.5" r="1.5" fill="#e81818"/><polygon points="504.0,81.2 504.8,84.0 507.4,82.6 506.0,85.2 508.8,86.0 506.0,86.8 507.4,89.4 504.8,88.0 504.0,90.8 503.2,88.0 500.6,89.4 502.0,86.8 499.2,86.0 502.0,85.2 500.6,82.6 503.2,84.0" fill="#f6ee1e" stroke="#a89818" stroke-width="0.5"/>
<path d="M524 86 h14" stroke="#5a8ad0" stroke-width="1.2"/><path d="M526.0 86.0 V94.0" stroke="#5a8ad0" stroke-width="1.4"/><path d="M523.8 93.0 h4.4 l-2.2 3.4 Z" fill="#5a8ad0"/><path d="M531.0 86.0 V94.0" stroke="#5a8ad0" stroke-width="1.4"/><path d="M528.8 93.0 h4.4 l-2.2 3.4 Z" fill="#5a8ad0"/><path d="M536.0 86.0 V94.0" stroke="#5a8ad0" stroke-width="1.4"/><path d="M533.8 93.0 h4.4 l-2.2 3.4 Z" fill="#5a8ad0"/><path d="M524 98.5 h14" stroke="#9ab8e8" stroke-width="3"/><circle cx="524.0" cy="98.5" r="1.5" fill="#e81818"/><circle cx="538.0" cy="98.5" r="1.5" fill="#e81818"/><polygon points="528.0,81.2 528.8,84.0 531.4,82.6 530.0,85.2 532.8,86.0 530.0,86.8 531.4,89.4 528.8,88.0 528.0,90.8 527.2,88.0 524.6,89.4 526.0,86.8 523.2,86.0 526.0,85.2 524.6,82.6 527.2,84.0" fill="#f6ee1e" stroke="#a89818" stroke-width="0.5"/>
<path d="M550 90 l4 -3 h10 v9 l-4 4 h-10 Z M550 90 h10 v10 M560 90 l4 -3" fill="none" stroke="#5a8ad0" stroke-width="1"/><path d="M553.0 84.0 V92.0" stroke="#5a8ad0" stroke-width="1.4"/><path d="M550.8 91.0 h4.4 l-2.2 3.4 Z" fill="#5a8ad0"/><path d="M558.0 84.0 V92.0" stroke="#5a8ad0" stroke-width="1.4"/><path d="M555.8 91.0 h4.4 l-2.2 3.4 Z" fill="#5a8ad0"/><path d="M563.0 84.0 V92.0" stroke="#5a8ad0" stroke-width="1.4"/><path d="M560.8 91.0 h4.4 l-2.2 3.4 Z" fill="#5a8ad0"/><circle cx="552.0" cy="100.0" r="1.3" fill="#e81818"/><circle cx="558.0" cy="100.5" r="1.3" fill="#e81818"/><polygon points="551.0,80.9 551.8,83.6 554.3,82.2 552.9,84.7 555.6,85.5 552.9,86.3 554.3,88.8 551.8,87.4 551.0,90.1 550.2,87.4 547.7,88.8 549.1,86.3 546.4,85.5 549.1,84.7 547.7,82.2 550.2,83.6" fill="#f6ee1e" stroke="#a89818" stroke-width="0.5"/>
<path d="M573 82 Q582 90 580 100" fill="none" stroke="#30b040" stroke-width="1.8"/><path d="M575 83 Q584 90 582 100" fill="none" stroke="#111" stroke-width="1"/><path d="M580 84 v3 M580 90 v3 M580 96 v3" stroke="#111" stroke-width="1.2"/><path d="M583 95 h5 M583 100.5 h5 M585.5 95 v5.5" stroke="#444" stroke-width="1.1"/><polygon points="573.0,80.8 573.7,83.3 576.0,82.0 574.7,84.3 577.2,85.0 574.7,85.7 576.0,88.0 573.7,86.7 573.0,89.2 572.3,86.7 570.0,88.0 571.3,85.7 568.8,85.0 571.3,84.3 570.0,82.0 572.3,83.3" fill="#f6ee1e" stroke="#a89818" stroke-width="0.5"/>
<path d="M593.3 88.7 h7.4 l-3.7 4.3 Z" fill="#111"/>
<g transform="translate(614.0,89.5) scale(1.10)"><circle cx="0" cy="-3" r="2.6" fill="#1ea048"/><path d="M0 -2 L5.5 5 H-5.5 Z" fill="#1ea048"/></g><path d="M614 94 L621 98" stroke="#e81818" stroke-width="1" stroke-dasharray="2 1"/><circle cx="623.0" cy="99.5" r="1.5" fill="#e81818"/><polygon points="610.0,81.8 610.7,84.3 613.0,83.0 611.7,85.3 614.2,86.0 611.7,86.7 613.0,89.0 610.7,87.7 610.0,90.2 609.3,87.7 607.0,89.0 608.3,86.7 605.8,86.0 608.3,85.3 607.0,83.0 609.3,84.3" fill="#f6ee1e" stroke="#a89818" stroke-width="0.5"/>
<path d="M629.3 88.7 h7.4 l-3.7 4.3 Z" fill="#111"/>
<path d="M644.5 80.0 v21" stroke="#a4a4a4" stroke-width="1" stroke-dasharray="1 1.7"/>
<g transform="translate(660.0,90.5)"><path d="M-8 -5 H6 L1 1 V7 L-3 8.5 V1 Z" fill="url(#gf)"/></g><g transform="translate(664.0,90.5)"><rect x="-1.0" y="-9.0" width="10.0" height="7.0" fill="#fff" stroke="#555" stroke-width="0.9"/><rect x="-1.0" y="-9.0" width="10.0" height="2.6" fill="#2a3a90"/></g>
<path d="M676.6 80.0 v21" stroke="#dadada" stroke-width="1"/>
<g transform="translate(693.0,90.5)"><ellipse cx="0" cy="0" rx="8" ry="6" fill="none" stroke="#999" stroke-width="0.9"/><path d="M-5 6 V-5 H5 V6" fill="none" stroke="#666" stroke-width="1.6"/></g>
<g transform="translate(717.0,90.5)"><path d="M-8 -6 Q-6 9 0 7 Q6 9 8 -6" fill="none" stroke="#777" stroke-width="1.1"/><path d="M-7 -4 Q0 10 7 -4 Z" fill="#ccc"/><path d="M-8 -8 v8 M8 -8 v8" stroke="#777" stroke-width="0.8"/></g>
<g transform="translate(742.0,90.5)"><path d="M-9 2 L0 -4 L9 0 L2 7 Z" fill="#999"/><path d="M-6 2 L0 -1 L6 1 M-3 4 L1 1.5 L5 3" stroke="#ccc" fill="none" stroke-width="0.9"/></g>
<g transform="translate(765.0,90.5)"><path d="M-8 -4 L-4 -8 H8 V4 L4 8 H-8 Z" fill="#8a8a8a"/><rect x="-8" y="-4" width="12" height="12" fill="#bdbdbd" stroke="#666" stroke-width="0.7"/><circle cx="-2" cy="2" r="3.4" fill="#e4e4e4" stroke="#777" stroke-width="0.7"/><circle cx="-2" cy="2" r="1.2" fill="#888"/></g>
<g transform="translate(790.0,90.5)"><path d="M-4 -2 L0 1 H-8 Z" fill="#999"/><circle cx="-4" cy="-4.5" r="2" fill="#999"/><path d="M-4 3 l3 3.5 h-2 v3 h-2 v-3 h-2 Z" fill="#fff" stroke="#888" stroke-width="0.7"/><path d="M2 -5 l3.5 -3 v2 h3 v2 h-3 v2 Z" fill="#fff" stroke="#888" stroke-width="0.7"/></g>
<g transform="translate(813.0,90.5)"><path d="M-8 5 L8 -6 L1 4 Z" fill="#aaa"/><path d="M-8 5 L8 -6" stroke="#888" stroke-width="0.8"/></g>
<path d="M828.6 80.0 v21" stroke="#dadada" stroke-width="1"/>
<g transform="translate(844.0,90.5)"><path d="M-7 -5 h14" stroke="#777" stroke-width="1.2"/><circle cx="-7" cy="-5" r="1.3" fill="#777"/><circle cx="7" cy="-5" r="1.3" fill="#777"/><path d="M-8 4 h16" stroke="#555" stroke-width="0.8"/><path d="M-7 4 q3.5 6 7 0 q3.5 -5 7 0" fill="none" stroke="#666" stroke-width="1.1"/></g>
<g transform="translate(868.0,90.5)"><rect x="-7" y="-6.5" width="14" height="3" rx="1.5" fill="#bbb" stroke="#777" stroke-width="0.6"/><path d="M-8 4 h16" stroke="#555" stroke-width="0.8"/><path d="M-7 4 q3.5 6 7 0 q3.5 -5 7 0" fill="none" stroke="#666" stroke-width="1.1"/></g>
<g transform="translate(892.0,90.5)"><rect x="-7" y="-6.5" width="14" height="3" rx="1.5" fill="#777"/><path d="M-4 -5 h2 M1 -5 h2" stroke="#fff" stroke-width="1"/><path d="M-8 4 h16" stroke="#555" stroke-width="0.8"/><path d="M-7 4 q3.5 6 7 0 q3.5 -5 7 0" fill="none" stroke="#666" stroke-width="1.1"/></g>
<g transform="translate(916.0,90.5)"><path d="M-7 -7 h14" stroke="#777" stroke-width="1.2"/><path d="M-4 -6 l3 5 h-6 Z M4 -6 l3 5 h-6 Z" fill="#999"/><path d="M-8 4 h16" stroke="#555" stroke-width="0.8"/><path d="M-7 4 q3.5 6 7 0 q3.5 -5 7 0" fill="none" stroke="#666" stroke-width="1.1"/></g>
<g transform="translate(940.0,90.5)"><path d="M-8 1 L8 -7" stroke="#999" stroke-width="2"/><path d="M-8 4 h16" stroke="#555" stroke-width="0.8"/><path d="M-7 4 q3.5 6 7 0 q3.5 -5 7 0" fill="none" stroke="#666" stroke-width="1.1"/></g>
<g transform="translate(966.0,90.5)"><rect x="-1.0" y="-9.0" width="11.0" height="7.0" fill="#fff" stroke="#555" stroke-width="0.9"/><rect x="-1.0" y="-9.0" width="11.0" height="2.6" fill="#2a3a90"/><path d="M-7 6 L2 -1 L6 2 L0 5 Z" fill="#4a78d8"/><path d="M-9 8 L-3 1" stroke="#555" stroke-width="1"/></g><polygon points="960.0,82.6 960.8,85.2 963.1,83.9 961.8,86.2 964.4,87.0 961.8,87.8 963.1,90.1 960.8,88.8 960.0,91.4 959.2,88.8 956.9,90.1 958.2,87.8 955.6,87.0 958.2,86.2 956.9,83.9 959.2,85.2" fill="#f6ee1e" stroke="#a89818" stroke-width="0.5"/>
<path d="M980.0 80.0 v21" stroke="#dadada" stroke-width="1"/>
<path d="M986.9 85.8 l2.8 3.2 l-2.8 3.2 M991.3 85.8 l2.8 3.2 l-2.8 3.2" fill="none" stroke="#444" stroke-width="1.2"/>
<path d="M1000.5 80.0 v21" stroke="#a4a4a4" stroke-width="1" stroke-dasharray="1 1.7"/>
<rect x="1006.7" y="82" width="120" height="18" fill="#e6e6f2"/><rect x="1010" y="85.5" width="10.5" height="11" fill="#d4f8f8"/>
<path d="M1114.5 88.5 l4.2 4.2 l4.2 -4.2" fill="none" stroke="#444" stroke-width="1"/>
<path d="M1131.2 85.8 l2.8 3.2 l-2.8 3.2 M1135.6 85.8 l2.8 3.2 l-2.8 3.2" fill="none" stroke="#444" stroke-width="1.2"/>
<path d="M1144.5 80.0 v21" stroke="#a4a4a4" stroke-width="1" stroke-dasharray="1 1.7"/>
<g transform="translate(1161.9,90.5)"><rect x="-8" y="-8" width="16" height="16" fill="#d8d8d8" stroke="#444" stroke-width="1.2"/><rect x="-8" y="-8" width="16" height="2.6" fill="#2a3a90"/><path d="M-6 7 L7 -4 V7 Z" fill="#90d060" stroke="#3a8a20" stroke-width="0.8"/><path d="M0 7 L7 1" stroke="#3a8a20" stroke-width="0.8"/></g>
<path d="M1175.0 88.7 h7.4 l-3.7 4.3 Z" fill="#111"/>
<path d="M1189.2 85.8 l2.8 3.2 l-2.8 3.2 M1193.6 85.8 l2.8 3.2 l-2.8 3.2" fill="none" stroke="#444" stroke-width="1.2"/>
</svg>
<span class="t" style="left:640.0px;top:55.7px;font-size:11.00px;color:#ffffff;letter-spacing:0.034px;">ULS</span>
<span class="t" style="left:671.6px;top:55.0px;font-size:11.00px;color:#1a1a1a;letter-spacing:-0.178px;transform:scaleX(0.8819);">DS1</span>
<span class="t" style="left:731.0px;top:55.0px;font-size:11.00px;color:#1a1a1a;letter-spacing:-0.132px;transform:scaleX(0.8800);">ULS (STR/GEO) - ...</span>
<span class="t" style="left:1027.5px;top:83.0px;font-size:11.00px;color:#1a1a1a;letter-spacing:-0.129px;transform:scaleX(0.9241);">1 - Global XYZ</span>
<div class="r" style="left:2.0px;top:106.0px;width:268.0px;height:774.0px;background:#ffffff;"></div>
<div class="r" style="left:3.2px;top:106.0px;width:0.8px;height:774.0px;background:#d4d4e0;"></div>
<div class="r" style="left:3.0px;top:106.0px;width:265.5px;height:20.0px;background:#dce8f6;"></div>
<span class="t" style="left:7.7px;top:108.5px;font-size:12.00px;color:#2a2a2a;letter-spacing:0.111px;font-weight:bold;">Navigator - Data</span>
<svg style="left:230px;top:108px" width="36" height="16" viewBox="0 0 36 16"><path d="M5.5 4.5 H11 V9" fill="none" stroke="#333" stroke-width="1.4"/><rect x="3.7" y="6.7" width="5.6" height="4.6" fill="none" stroke="#333" stroke-width="1.4"/><path d="M24.5 5.5 L30 11 M30 5.5 L24.5 11" stroke="#222" stroke-width="1.7"/></svg>
<span class="t" style="left:87.5px;top:128.2px;font-size:10.50px;color:#1a1a1a;letter-spacing:-0.158px;">Member Sets</span>
<span class="t" style="left:87.5px;top:146.2px;font-size:10.50px;color:#1a1a1a;letter-spacing:-0.125px;transform:scaleX(0.9606);">Surface Sets</span>
<span class="t" style="left:87.5px;top:164.2px;font-size:10.50px;color:#1a1a1a;letter-spacing:-0.208px;">Solid Sets</span>
<span class="t" style="left:67.5px;top:182.2px;font-size:10.50px;color:#1a1a1a;letter-spacing:-0.224px;">Special Objects</span>
<span class="t" style="left:67.5px;top:200.2px;font-size:10.50px;color:#1a1a1a;letter-spacing:-0.130px;">Types for Nodes</span>
<span class="t" style="left:67.5px;top:218.2px;font-size:10.50px;color:#1a1a1a;letter-spacing:-0.194px;">Types for Lines</span>
<span class="t" style="left:67.5px;top:236.2px;font-size:10.50px;color:#1a1a1a;letter-spacing:-0.092px;">Types for Members</span>
<span class="t" style="left:67.5px;top:254.2px;font-size:10.50px;color:#1a1a1a;letter-spacing:-0.202px;">Types for Surfaces</span>
<span class="t" style="left:67.5px;top:272.2px;font-size:10.50px;color:#1a1a1a;letter-spacing:-0.150px;">Types for Solids</span>
<span class="t" style="left:67.5px;top:290.2px;font-size:10.50px;color:#1a1a1a;letter-spacing:-0.202px;">Types for Special Objects</span>
<span class="t" style="left:67.5px;top:308.2px;font-size:10.50px;color:#1a1a1a;letter-spacing:-0.160px;">Types for Concrete Design</span>
<span class="t" style="left:87.5px;top:326.2px;font-size:10.50px;color:#1a1a1a;letter-spacing:-0.162px;">Effective Lengths</span>
<span class="t" style="left:87.5px;top:344.2px;font-size:10.50px;color:#1a1a1a;letter-spacing:-0.055px;">Concrete Durabilities</span>
<span class="t" style="left:87.5px;top:362.2px;font-size:10.50px;color:#1a1a1a;letter-spacing:-0.049px;">Reinforcement Directions</span>
<span class="t" style="left:87.5px;top:380.2px;font-size:10.50px;color:#1a1a1a;letter-spacing:-0.138px;">Surface Reinforcements</span>
<span class="t" style="left:102.5px;top:398.2px;font-size:10.50px;color:#1a1a1a;letter-spacing:-0.090px;">1 - On Surface | Mesh |</span>
<div class="r" style="left:84.0px;top:415.0px;width:146.0px;height:18.0px;background:#cce4f7;border:1px solid #99c9ef;"></div>
<span class="t" style="left:102.5px;top:416.2px;font-size:10.50px;color:#1a1a1a;letter-spacing:-0.185px;">2 - Free Rectangular | R</span>
<span class="t" style="left:102.5px;top:434.2px;font-size:10.50px;color:#1a1a1a;letter-spacing:-0.185px;">4 - Free Rectangular | R</span>
<span class="t" style="left:102.5px;top:452.2px;font-size:10.50px;color:#1a1a1a;letter-spacing:-0.185px;">5 - Free Rectangular | R</span>
<span class="t" style="left:102.5px;top:470.2px;font-size:10.50px;color:#1a1a1a;letter-spacing:-0.185px;">6 - Free Rectangular | R</span>
<span class="t" style="left:67.5px;top:488.2px;font-size:10.50px;color:#1a1a1a;letter-spacing:-0.041px;">Imperfections</span>
<span class="t" style="left:67.5px;top:506.2px;font-size:10.50px;color:#1a1a1a;letter-spacing:-0.103px;">Load Cases &amp; Combinations</span>
<span class="t" style="left:87.5px;top:524.2px;font-size:10.50px;color:#1a1a1a;letter-spacing:-0.140px;transform:scaleX(0.9426);">Load Cases</span>
<span class="t" style="left:87.5px;top:542.2px;font-size:10.50px;color:#1a1a1a;letter-spacing:-0.176px;">Actions</span>
<span class="t" style="left:87.5px;top:560.2px;font-size:10.50px;color:#1a1a1a;letter-spacing:-0.101px;">Design Situations</span>
<span class="t" style="left:87.5px;top:578.2px;font-size:10.50px;color:#1a1a1a;letter-spacing:-0.021px;">Action Combinations</span>
<span class="t" style="left:87.5px;top:596.2px;font-size:10.50px;color:#1a1a1a;letter-spacing:-0.063px;">Load Combinations</span>
<span class="t" style="left:87.5px;top:614.2px;font-size:10.50px;color:#1a1a1a;letter-spacing:-0.156px;">Static Analysis Settings</span>
<span class="t" style="left:82.4px;top:632.2px;font-size:10.50px;color:#1a1a1a;letter-spacing:-0.031px;">Combination Wizards</span>
<span class="t" style="left:67.5px;top:650.2px;font-size:10.50px;color:#1a1a1a;letter-spacing:-0.175px;">Load Wizards</span>
<span class="t" style="left:67.5px;top:668.2px;font-size:10.50px;color:#1a1a1a;letter-spacing:-0.143px;transform:scaleX(0.9500);">Loads</span>
<span class="t" style="left:87.5px;top:686.2px;font-size:10.50px;color:#1a1a1a;letter-spacing:-0.197px;">LC1 - Eigengewicht</span>
<span class="t" style="left:87.5px;top:704.2px;font-size:10.50px;color:#1a1a1a;letter-spacing:-0.188px;">LC2 - Zusätzliches Eigengewicht</span>
<span class="t" style="left:87.5px;top:722.2px;font-size:10.50px;color:#1a1a1a;letter-spacing:-0.198px;">LC3 - Veränderliche Lasten</span>
<span class="t" style="left:87.5px;top:740.2px;font-size:10.50px;color:#1a1a1a;letter-spacing:-0.134px;transform:scaleX(0.9505);">LC4 - Schnee</span>
<span class="t" style="left:67.5px;top:758.2px;font-size:10.50px;color:#1a1a1a;letter-spacing:-0.125px;transform:scaleX(0.9520);">Results</span>
<span class="t" style="left:67.5px;top:776.2px;font-size:10.50px;color:#1a1a1a;letter-spacing:-0.195px;">Guide Objects</span>
<span class="t" style="left:67.5px;top:794.2px;font-size:10.50px;color:#1a1a1a;letter-spacing:-0.167px;">Concrete Design</span>
<span class="t" style="left:67.5px;top:812.2px;font-size:10.50px;color:#1a1a1a;letter-spacing:-0.042px;">Printout Reports</span>
<div class="r" style="left:251.0px;top:127.0px;width:16.4px;height:712.7px;background:#f0f0f0;"></div>
<div class="r" style="left:255.3px;top:127.0px;width:7.7px;height:695.0px;background:#858585;"></div>
<div class="r" style="left:3.0px;top:840.0px;width:247.0px;height:17.0px;background:#f0f0f0;"></div>
<div class="r" style="left:21.3px;top:845.0px;width:101.2px;height:7.0px;background:#858585;"></div>
<div class="r" style="left:250.0px;top:840.0px;width:18.0px;height:17.0px;background:#ffffff;"></div>
<div class="r" style="left:267.4px;top:106.0px;width:1.1px;height:774.0px;background:#d6d6e0;"></div>
<div class="r" style="left:268.5px;top:106.0px;width:3.9px;height:774.0px;background:#f9f9f9;"></div>
<div class="r" style="left:3.0px;top:857.0px;width:265.4px;height:22.8px;background:#f7f7f7;border-top:1px solid #dcdce4;border-bottom:1px solid #d6d6e0;"></div>
<div class="r" style="left:3.8px;top:857.0px;width:31.7px;height:21.8px;background:#ffffff;"></div>
<div class="r" style="left:36.0px;top:857.5px;width:30.5px;height:20.5px;background:#f0f0f0;border:1px solid #dcdcdc;"></div>
<div class="r" style="left:67.0px;top:857.5px;width:32.0px;height:20.5px;background:#f0f0f0;border:1px solid #dcdcdc;"></div>
<svg style="left:0;top:0" width="270" height="880" viewBox="0 0 270 880">
<g transform="translate(66.0,128.0)"><path d="M2.3 13.8 L14 2.6" stroke="#5c7cb4" stroke-width="3.6"/><path d="M2.3 13.8 L14 2.6" stroke="#b8d0f0" stroke-width="2"/><path d="M7 13 h4 l3 -4.5 v-2" fill="none" stroke="#222" stroke-width="0.8"/><circle cx="2.3" cy="14.2" r="1.6" fill="#e81818"/><circle cx="8.6" cy="7.8" r="1.6" fill="#e81818"/><circle cx="15" cy="1.6" r="1.6" fill="#e81818"/><path d="M11.3 13.3 h5 M13.8 10.8 v5" stroke="#111" stroke-width="1.2"/></g>
<g transform="translate(66.0,146.0)"><defs><linearGradient id="gs1" x1="0" x2="1" y1="0" y2="1"><stop offset="0" stop-color="#b4d8f8"/><stop offset="1" stop-color="#4a80c4"/></linearGradient></defs><path d="M0.8 7.4 L6.2 2.2 L15.6 6.2 L11 12 Z" fill="url(#gs1)" stroke="#5a86c0" stroke-width="0.5"/><path d="M11.1 13.0 h5 M13.6 10.5 v5" stroke="#111" stroke-width="1.2"/></g>
<g transform="translate(66.0,164.0)"><path d="M0.5 4.6 L3 2.4 H12.4 L10 4.6 Z" fill="#c4dcfa"/><rect x="0.5" y="4.6" width="9.5" height="8.6" fill="#a8ccf8"/><path d="M10 4.6 L12.4 2.4 V11 L10 13.2 Z" fill="#5c88c4"/><path d="M0.5 4.6 L3 2.4 H12.4 V11 L10 13.2 H0.5 Z" fill="none" stroke="#7ea0d0" stroke-width="0.5"/><path d="M11.1 13.2 h5 M13.6 10.7 v5" stroke="#111" stroke-width="1.2"/></g>
<g transform="translate(46.0,182.4)"><path d="M0.6 2.6 Q0.6 1 2.2 1 H5.6 Q6.6 1 7.2 2 H14 Q15.5 2 15.5 3.5 V12 Q15.5 13.4 14 13.4 H2.2 Q0.6 13.4 0.6 12 Z" fill="#f9f1b6" stroke="#d6c874" stroke-width="0.9"/></g>
<path d="M31.7 186.0 l4.2 4 l-4.2 4" fill="none" stroke="#767676" stroke-width="1.05"/>
<g transform="translate(46.0,200.4)"><path d="M0.6 2.6 Q0.6 1 2.2 1 H5.6 Q6.6 1 7.2 2 H14 Q15.5 2 15.5 3.5 V12 Q15.5 13.4 14 13.4 H2.2 Q0.6 13.4 0.6 12 Z" fill="#f9f1b6" stroke="#d6c874" stroke-width="0.9"/></g>
<path d="M31.7 204.0 l4.2 4 l-4.2 4" fill="none" stroke="#767676" stroke-width="1.05"/>
<g transform="translate(46.0,218.4)"><path d="M0.6 2.6 Q0.6 1 2.2 1 H5.6 Q6.6 1 7.2 2 H14 Q15.5 2 15.5 3.5 V12 Q15.5 13.4 14 13.4 H2.2 Q0.6 13.4 0.6 12 Z" fill="#f9f1b6" stroke="#d6c874" stroke-width="0.9"/></g>
<path d="M31.7 222.0 l4.2 4 l-4.2 4" fill="none" stroke="#767676" stroke-width="1.05"/>
<g transform="translate(46.0,236.4)"><path d="M0.6 2.6 Q0.6 1 2.2 1 H5.6 Q6.6 1 7.2 2 H14 Q15.5 2 15.5 3.5 V12 Q15.5 13.4 14 13.4 H2.2 Q0.6 13.4 0.6 12 Z" fill="#f9f1b6" stroke="#d6c874" stroke-width="0.9"/></g>
<path d="M31.7 240.0 l4.2 4 l-4.2 4" fill="none" stroke="#767676" stroke-width="1.05"/>
<g transform="translate(46.0,254.4)"><path d="M0.6 2.6 Q0.6 1 2.2 1 H5.6 Q6.6 1 7.2 2 H14 Q15.5 2 15.5 3.5 V12 Q15.5 13.4 14 13.4 H2.2 Q0.6 13.4 0.6 12 Z" fill="#f9f1b6" stroke="#d6c874" stroke-width="0.9"/></g>
<path d="M31.7 258.0 l4.2 4 l-4.2 4" fill="none" stroke="#767676" stroke-width="1.05"/>
<g transform="translate(46.0,272.4)"><path d="M0.6 2.6 Q0.6 1 2.2 1 H5.6 Q6.6 1 7.2 2 H14 Q15.5 2 15.5 3.5 V12 Q15.5 13.4 14 13.4 H2.2 Q0.6 13.4 0.6 12 Z" fill="#f9f1b6" stroke="#d6c874" stroke-width="0.9"/></g>
<path d="M31.7 276.0 l4.2 4 l-4.2 4" fill="none" stroke="#767676" stroke-width="1.05"/>
<g transform="translate(46.0,290.4)"><path d="M0.6 2.6 Q0.6 1 2.2 1 H5.6 Q6.6 1 7.2 2 H14 Q15.5 2 15.5 3.5 V12 Q15.5 13.4 14 13.4 H2.2 Q0.6 13.4 0.6 12 Z" fill="#f9f1b6" stroke="#d6c874" stroke-width="0.9"/></g>
<path d="M31.7 294.0 l4.2 4 l-4.2 4" fill="none" stroke="#767676" stroke-width="1.05"/>
<g transform="translate(46.0,308.4)"><path d="M0.6 2.6 Q0.6 1 2.2 1 H6 Q7 1 7.6 2 H12.5 Q13.8 2 13.8 3.3 V12.3 H0.6 Z" fill="#f3e9a4" stroke="#d2c470" stroke-width="0.9"/><path d="M2.2 4 H14.2 Q15.6 4 15.5 5.4 L15.2 12 Q15.1 13.4 13.7 13.4 H2.2 Q0.7 13.4 0.7 12 L1 5.4 Q1 4 2.2 4 Z" fill="#f9f1b8" stroke="#d2c470" stroke-width="0.9"/></g>
<path d="M29.3 313.4 l4.3 4.3 l4.3 -4.3" fill="none" stroke="#3a3a3a" stroke-width="1.15"/>
<g transform="translate(66.0,326.0)"><path d="M8 1.5 V15" stroke="#9cc0e4" stroke-width="2.2"/><path d="M8 2 C2.5 4 3.5 7.5 8 8.6 C12.5 10 12 13 8 15" fill="none" stroke="#f07020" stroke-width="1.1"/><path d="M8 2 C15 5 15 12 8 15" fill="none" stroke="#30c4c4" stroke-width="1.1"/><circle cx="8" cy="2.2" r="1.8" fill="#e81818"/><circle cx="8" cy="8.6" r="1.5" fill="#e81818"/><circle cx="8" cy="14.6" r="1.8" fill="#e81818"/><path d="M5.5 0.6 h5 M5.5 16 h5" stroke="#333" stroke-width="0.9"/></g>
<path d="M51.7 330.0 l4.2 4 l-4.2 4" fill="none" stroke="#767676" stroke-width="1.05"/>
<g transform="translate(66.0,344.0)"><path d="M1.4 7 L8.5 1.5 H15 L8 7 Z" fill="#d4d4d8"/><path d="M8 7 L15 1.5 V9 L8 15 Z" fill="#b4b4b8"/><rect x="1.4" y="7" width="6.6" height="8" fill="#8c8c92"/><path d="M1.4 7 L8.5 1.5 H15 V9 L8 15 H1.4 Z" fill="none" stroke="#777" stroke-width="0.6"/><path d="M9.5 9 L13.5 5.6 M10 11 L14 7.6" stroke="#999" stroke-width="0.6"/><rect x="3" y="12.2" width="1.3" height="1.3" fill="#4a4ad0"/><rect x="5.4" y="12.2" width="1.3" height="1.3" fill="#4a4ad0"/><path d="M0.8 5 L5 1 M10 15.6 L15.5 10.4" stroke="#40e0e8" stroke-width="1.1"/></g>
<path d="M51.7 348.0 l4.2 4 l-4.2 4" fill="none" stroke="#767676" stroke-width="1.05"/>
<g transform="translate(66.0,362.0)"><path d="M0.6 10.6 L10.6 0.8 H15.4 L15.8 10.6 Z" fill="#c6c6cc" stroke="#8a8a90" stroke-width="0.5"/><rect x="0.6" y="10.6" width="15.2" height="4" fill="#9c9ca2" stroke="#808086" stroke-width="0.5"/><path d="M3.8 10.6 L12.6 1.6 M10.6 10.6 L15.3 5.4" stroke="#8c8c94" stroke-width="0.9"/><path d="M7.2 10.6 L15 2.4 M13.6 10.6 L15.6 8.4" stroke="#5a5af0" stroke-width="1.1"/><path d="M3 12.6 h1.2 M7 12.6 h1.2 M11 12.6 h1.2" stroke="#4a4ae0" stroke-width="1.6"/><path d="M8.6 4.8 h6 M6.4 7.2 h8.6 M11 2.6 h4" stroke="#6a6af4" stroke-width="1.2" stroke-dasharray="2.2 1.2"/></g>
<path d="M51.7 366.0 l4.2 4 l-4.2 4" fill="none" stroke="#767676" stroke-width="1.05"/>
<g transform="translate(66.0,380.0)"><path d="M0.6 10.6 L10.6 0.8 H15.4 L15.8 10.6 Z" fill="#c6c6cc" stroke="#8a8a90" stroke-width="0.5"/><rect x="0.6" y="10.6" width="15.2" height="4" fill="#9c9ca2" stroke="#808086" stroke-width="0.5"/><path d="M3.8 10.6 L12.6 1.6 M10.6 10.6 L15.3 5.4" stroke="#8c8c94" stroke-width="0.9"/><path d="M7.2 10.6 L15 2.4 M13.6 10.6 L15.6 8.4" stroke="#5a5af0" stroke-width="1.1"/><path d="M3 12.6 h1.2 M7 12.6 h1.2 M11 12.6 h1.2" stroke="#4a4ae0" stroke-width="1.6"/></g>
<path d="M49.3 385.4 l4.3 4.3 l4.3 -4.3" fill="none" stroke="#3a3a3a" stroke-width="1.15"/>
<rect x="86" y="400.2" width="11.4" height="11.6" fill="#ccfcfc"/>
<rect x="86" y="418.2" width="11.4" height="11.6" fill="#aaa844"/>
<rect x="86" y="436.2" width="11.4" height="11.6" fill="#74b204"/>
<rect x="86" y="454.2" width="11.4" height="11.6" fill="#fb0606"/>
<rect x="86" y="472.2" width="11.4" height="11.6" fill="#8e8efc"/>
<g transform="translate(46.0,488.4)"><path d="M0.6 2.6 Q0.6 1 2.2 1 H5.6 Q6.6 1 7.2 2 H14 Q15.5 2 15.5 3.5 V12 Q15.5 13.4 14 13.4 H2.2 Q0.6 13.4 0.6 12 Z" fill="#f9f1b6" stroke="#d6c874" stroke-width="0.9"/></g>
<path d="M31.7 492.0 l4.2 4 l-4.2 4" fill="none" stroke="#767676" stroke-width="1.05"/>
<g transform="translate(46.0,506.4)"><path d="M0.6 2.6 Q0.6 1 2.2 1 H6 Q7 1 7.6 2 H12.5 Q13.8 2 13.8 3.3 V12.3 H0.6 Z" fill="#f3e9a4" stroke="#d2c470" stroke-width="0.9"/><path d="M2.2 4 H14.2 Q15.6 4 15.5 5.4 L15.2 12 Q15.1 13.4 13.7 13.4 H2.2 Q0.7 13.4 0.7 12 L1 5.4 Q1 4 2.2 4 Z" fill="#f9f1b8" stroke="#d2c470" stroke-width="0.9"/></g>
<path d="M29.3 511.4 l4.3 4.3 l4.3 -4.3" fill="none" stroke="#3a3a3a" stroke-width="1.15"/>
<g transform="translate(66.0,524.0)"><path d="M4.5 3.4 V11" stroke="#3a6cc8" stroke-width="1.2"/><path d="M2.2 8.8 L4.5 12.6 L6.8 8.8" fill="none" stroke="#3a6cc8" stroke-width="1.2"/><path d="M0 14.8 H15.6" stroke="#222" stroke-width="1.3"/></g>
<path d="M51.7 528.0 l4.2 4 l-4.2 4" fill="none" stroke="#767676" stroke-width="1.05"/>
<g transform="translate(66.0,542.0)"><rect x="0.6" y="1" width="4.4" height="3" fill="#fff" stroke="#555" stroke-width="0.8"/><rect x="0.6" y="10.6" width="4.4" height="3" fill="#fff" stroke="#555" stroke-width="0.8"/><path d="M5 2.4 Q9.5 2 11 6 M5 12.2 Q9.5 12.8 11 9" fill="none" stroke="#333" stroke-width="1"/><path d="M9 3.6 l2.6 3.2 l0.6 -3.8 Z M9 11.4 l2.6 -3.2 l0.6 3.8 Z" fill="#333"/><circle cx="13" cy="7.6" r="2.5" fill="#4a86e8"/></g>
<path d="M51.7 546.0 l4.2 4 l-4.2 4" fill="none" stroke="#767676" stroke-width="1.05"/>
<g transform="translate(66.0,560.0)"><rect x="0.6" y="1" width="4.4" height="3" fill="#4a86e8" stroke="none"/><rect x="0.6" y="10.6" width="4.4" height="3" fill="#20a838" stroke="none"/><path d="M5 2.4 Q9.5 2 11 6 M5 12.2 Q9.5 12.8 11 9" fill="none" stroke="#333" stroke-width="1"/><path d="M9 3.6 l2.6 3.2 l0.6 -3.8 Z M9 11.4 l2.6 -3.2 l0.6 3.8 Z" fill="#333"/><rect x="10.6" y="5.4" width="5.2" height="4" fill="#f020f0"/></g>
<path d="M51.7 564.0 l4.2 4 l-4.2 4" fill="none" stroke="#767676" stroke-width="1.05"/>
<g transform="translate(66.0,578.0)"><rect x="0.6" y="1" width="4.4" height="3" fill="#fff" stroke="#555" stroke-width="0.8"/><rect x="0.6" y="10.6" width="4.4" height="3" fill="#fff" stroke="#555" stroke-width="0.8"/><path d="M5 2.4 Q9.5 2 11 6 M5 12.2 Q9.5 12.8 11 9" fill="none" stroke="#333" stroke-width="1"/><path d="M9 3.6 l2.6 3.2 l0.6 -3.8 Z M9 11.4 l2.6 -3.2 l0.6 3.8 Z" fill="#333"/><path d="M13 4.8 l2.8 2.8 l-2.8 2.8 l-2.8 -2.8 Z" fill="#4a86e8"/></g>
<path d="M51.7 582.0 l4.2 4 l-4.2 4" fill="none" stroke="#767676" stroke-width="1.05"/>
<g transform="translate(66.0,596.0)"><rect x="0.6" y="1" width="4.4" height="3" fill="#fff" stroke="#555" stroke-width="0.8"/><rect x="0.6" y="10.6" width="4.4" height="3" fill="#fff" stroke="#555" stroke-width="0.8"/><path d="M5 2.4 Q9.5 2 11 6 M5 12.2 Q9.5 12.8 11 9" fill="none" stroke="#333" stroke-width="1"/><path d="M9 3.6 l2.6 3.2 l0.6 -3.8 Z M9 11.4 l2.6 -3.2 l0.6 3.8 Z" fill="#333"/><rect x="10.8" y="5.6" width="4.8" height="3.8" fill="#20a838"/></g>
<path d="M51.7 600.0 l4.2 4 l-4.2 4" fill="none" stroke="#767676" stroke-width="1.05"/>
<g transform="translate(66.0,614.0)"><path d="M0 5.6 L10 7.4 L0 9.6 Z" fill="#2a48a8"/><path d="M7 7 L15.6 3 V7.6 Z" fill="#e03020"/><circle cx="11.8" cy="12" r="3.3" fill="none" stroke="#6a8af0" stroke-width="1.6" stroke-dasharray="1.5 1"/><circle cx="11.8" cy="12" r="2.4" fill="#6a8af0"/><circle cx="11.8" cy="12" r="1" fill="#fff"/></g>
<path d="M51.7 618.0 l4.2 4 l-4.2 4" fill="none" stroke="#767676" stroke-width="1.05"/>
<g transform="translate(64.0,632.0)"><rect x="2.4" y="3.4" width="3.4" height="2.6" fill="#fff" stroke="#444" stroke-width="0.8"/><rect x="2.4" y="10.4" width="3.4" height="2.6" fill="#fff" stroke="#444" stroke-width="0.8"/><path d="M5.8 4.6 H8.6 V11.8 H5.8 M8.6 6 H10.8 L12.4 8 L10.8 10 H8.6" fill="none" stroke="#444" stroke-width="0.9"/></g>
<path d="M51.7 636.0 l4.2 4 l-4.2 4" fill="none" stroke="#767676" stroke-width="1.05"/>
<g transform="translate(46.0,650.4)"><path d="M0.6 2.6 Q0.6 1 2.2 1 H5.6 Q6.6 1 7.2 2 H14 Q15.5 2 15.5 3.5 V12 Q15.5 13.4 14 13.4 H2.2 Q0.6 13.4 0.6 12 Z" fill="#f9f1b6" stroke="#d6c874" stroke-width="0.9"/></g>
<path d="M31.7 654.0 l4.2 4 l-4.2 4" fill="none" stroke="#767676" stroke-width="1.05"/>
<g transform="translate(46.0,668.4)"><path d="M0.6 2.6 Q0.6 1 2.2 1 H6 Q7 1 7.6 2 H12.5 Q13.8 2 13.8 3.3 V12.3 H0.6 Z" fill="#f3e9a4" stroke="#d2c470" stroke-width="0.9"/><path d="M2.2 4 H14.2 Q15.6 4 15.5 5.4 L15.2 12 Q15.1 13.4 13.7 13.4 H2.2 Q0.7 13.4 0.7 12 L1 5.4 Q1 4 2.2 4 Z" fill="#f9f1b8" stroke="#d2c470" stroke-width="0.9"/></g>
<path d="M29.3 673.4 l4.3 4.3 l4.3 -4.3" fill="none" stroke="#3a3a3a" stroke-width="1.15"/>
<g transform="translate(66.0,686.4)"><path d="M0.6 2.6 Q0.6 1 2.2 1 H5.6 Q6.6 1 7.2 2 H14 Q15.5 2 15.5 3.5 V12 Q15.5 13.4 14 13.4 H2.2 Q0.6 13.4 0.6 12 Z" fill="#f9f1b6" stroke="#d6c874" stroke-width="0.9"/></g>
<path d="M51.7 690.0 l4.2 4 l-4.2 4" fill="none" stroke="#767676" stroke-width="1.05"/>
<g transform="translate(66.0,704.4)"><path d="M0.6 2.6 Q0.6 1 2.2 1 H5.6 Q6.6 1 7.2 2 H14 Q15.5 2 15.5 3.5 V12 Q15.5 13.4 14 13.4 H2.2 Q0.6 13.4 0.6 12 Z" fill="#f9f1b6" stroke="#d6c874" stroke-width="0.9"/></g>
<path d="M51.7 708.0 l4.2 4 l-4.2 4" fill="none" stroke="#767676" stroke-width="1.05"/>
<g transform="translate(66.0,722.4)"><path d="M0.6 2.6 Q0.6 1 2.2 1 H5.6 Q6.6 1 7.2 2 H14 Q15.5 2 15.5 3.5 V12 Q15.5 13.4 14 13.4 H2.2 Q0.6 13.4 0.6 12 Z" fill="#f9f1b6" stroke="#d6c874" stroke-width="0.9"/></g>
<path d="M51.7 726.0 l4.2 4 l-4.2 4" fill="none" stroke="#767676" stroke-width="1.05"/>
<g transform="translate(66.0,740.4)"><path d="M0.6 2.6 Q0.6 1 2.2 1 H5.6 Q6.6 1 7.2 2 H14 Q15.5 2 15.5 3.5 V12 Q15.5 13.4 14 13.4 H2.2 Q0.6 13.4 0.6 12 Z" fill="#f9f1b6" stroke="#d6c874" stroke-width="0.9"/></g>
<path d="M51.7 744.0 l4.2 4 l-4.2 4" fill="none" stroke="#767676" stroke-width="1.05"/>
<g transform="translate(46.0,758.4)"><path d="M0.6 2.6 Q0.6 1 2.2 1 H5.6 Q6.6 1 7.2 2 H14 Q15.5 2 15.5 3.5 V12 Q15.5 13.4 14 13.4 H2.2 Q0.6 13.4 0.6 12 Z" fill="#f9f1b6" stroke="#d6c874" stroke-width="0.9"/></g>
<path d="M31.7 762.0 l4.2 4 l-4.2 4" fill="none" stroke="#767676" stroke-width="1.05"/>
<g transform="translate(46.0,776.4)"><path d="M0.6 2.6 Q0.6 1 2.2 1 H5.6 Q6.6 1 7.2 2 H14 Q15.5 2 15.5 3.5 V12 Q15.5 13.4 14 13.4 H2.2 Q0.6 13.4 0.6 12 Z" fill="#f9f1b6" stroke="#d6c874" stroke-width="0.9"/></g>
<path d="M31.7 780.0 l4.2 4 l-4.2 4" fill="none" stroke="#767676" stroke-width="1.05"/>
<g transform="translate(46.0,794.4)"><path d="M0.6 2.6 Q0.6 1 2.2 1 H5.6 Q6.6 1 7.2 2 H14 Q15.5 2 15.5 3.5 V12 Q15.5 13.4 14 13.4 H2.2 Q0.6 13.4 0.6 12 Z" fill="#f9f1b6" stroke="#d6c874" stroke-width="0.9"/></g>
<path d="M31.7 798.0 l4.2 4 l-4.2 4" fill="none" stroke="#767676" stroke-width="1.05"/>
<g transform="translate(46.0,812.4)"><path d="M0.6 2.6 Q0.6 1 2.2 1 H5.6 Q6.6 1 7.2 2 H14 Q15.5 2 15.5 3.5 V12 Q15.5 13.4 14 13.4 H2.2 Q0.6 13.4 0.6 12 Z" fill="#f9f1b6" stroke="#d6c874" stroke-width="0.9"/></g>
</svg>
<svg style="left:0;top:857px" width="110" height="23" viewBox="0 0 110 23"><rect x="12" y="4" width="14" height="9" fill="#fff" stroke="#4a78d0" stroke-width="1"/><rect x="12" y="4" width="14" height="2.2" fill="#4a78d0"/><path d="M10.5 9 H15 L16 10 H21 V17 H10.5 Z" fill="#f2c040" stroke="#b88a10" stroke-width="0.7"/><path d="M17 13 L26 14 L24 18 L19 16 Z" fill="#70a8e8"/><circle cx="21.5" cy="19" r="1" fill="#e02020"/><path d="M44 11.5 Q50.5 5 57 11.5 Q50.5 18 44 11.5 Z" fill="#fff" stroke="#2a3a88" stroke-width="1.2"/><circle cx="50.5" cy="11.5" r="3.1" fill="#2a3a88"/><circle cx="50.5" cy="11.5" r="1.1" fill="#8aa0e0"/><rect x="75" y="7.5" width="9.5" height="8.5" rx="1.3" fill="#555"/><path d="M84.5 11 L89 7.8 V15.7 L84.5 12.5 Z" fill="#555"/></svg>
<div class="r" style="left:272.4px;top:105.5px;width:927.6px;height:774.8px;background:#ffffff;"></div>
<svg style="left:0;top:0" width="1200" height="902" viewBox="0 0 1200 902">
<defs><linearGradient id="wl" x1="0" x2="1" y1="0" y2="0"><stop offset="0" stop-color="#7e7e7e"/><stop offset="1" stop-color="#8c8c8c"/></linearGradient></defs>
<circle cx="1003.8" cy="287.2" r="101" fill="#9d9d9d" stroke="#4a4a4a" stroke-width="0.8"/>
<rect x="299" y="186.2" width="704.8" height="680.5" fill="#999999"/>
<path d="M1003.8 186.2 H940 V351 L1003.8 287.2 Z" fill="url(#wl)"/>
<path d="M940 351 L1003.8 287.2 V388.2 A101 101 0 0 1 940 365.6 Z" fill="#999"/>
<path d="M940 365.6 A101 101 0 0 0 1003.8 388.2 V589 H940 Z" fill="#8f8f8f"/>
<path d="M940 365.6 A101 101 0 0 0 1003.8 388.2" fill="none" stroke="#a8a8a8" stroke-width="0.8"/>
<path d="M1003.8 287.2 L940 351" stroke="#6a6a6a" stroke-width="0.9"/>
<path d="M940 589.3 H1003.8" stroke="#808080" stroke-width="0.9"/>
<path d="M1003.8 186.2 V866.7" stroke="#6c6c6c" stroke-width="1.2"/>
<path d="M299 866.7 H1003.8" stroke="#3c3c3c" stroke-width="1"/>
<path d="M940 186.4 H1003.8" stroke="#5c5c5c" stroke-width="0.9"/>
<path d="M299.3 186.2 V866.7" stroke="#8a8a8a" stroke-width="0.8"/>
<path d="M940 188 H1002 M963 188 v-3 M975 188 v-3 M986 188 v-3 M997 188 v-3 M1001 390 V488 M1001 396 h3 M1001 405 h3 M1001 414 h3 M1001 423 h3 M1001 432 h3 M1001 441 h3 M1001 450 h3 M1001 459 h3 M1001 468 h3 M1001 477 h3 M1001 486 h3" stroke="#2a9298" stroke-width="1.1" fill="none"/>
<g opacity="0.75"><path d="M1003.3 194.0 h15 M1015.8 194.0 v1.5 l-3 2 l5.5 2.8 l-5.5 2.8 l3 1.6 v1.6 M1012.6 206.4 h6.4" fill="none" stroke="#5cb45c" stroke-width="0.9"/><circle cx="1015.8" cy="194.0" r="0.9" fill="#5cb45c"/></g>
<g opacity="0.75"><path d="M1051.5 214.7 h15 M1064.0 214.7 v1.5 l-3 2 l5.5 2.8 l-5.5 2.8 l3 1.6 v1.6 M1060.8 227.1 h6.4" fill="none" stroke="#5cb45c" stroke-width="0.9"/><circle cx="1064.0" cy="214.7" r="0.9" fill="#5cb45c"/></g>
<g opacity="0.75"><path d="M997.5 240.0 h15 M1010.0 240.0 v1.5 l-3 2 l5.5 2.8 l-5.5 2.8 l3 1.6 v1.6 M1006.8 252.4 h6.4" fill="none" stroke="#5cb45c" stroke-width="0.9"/><circle cx="1010.0" cy="240.0" r="0.9" fill="#5cb45c"/></g>
<g opacity="0.75"><path d="M954.8 212.6 h15 M967.3 212.6 v1.5 l-3 2 l5.5 2.8 l-5.5 2.8 l3 1.6 v1.6 M964.1 225.0 h6.4" fill="none" stroke="#5cb45c" stroke-width="0.9"/><circle cx="967.3" cy="212.6" r="0.9" fill="#5cb45c"/></g>
<g opacity="0.75"><path d="M964.9 254.7 h15 M977.4 254.7 v1.5 l-3 2 l5.5 2.8 l-5.5 2.8 l3 1.6 v1.6 M974.2 267.1 h6.4" fill="none" stroke="#5cb45c" stroke-width="0.9"/><circle cx="977.4" cy="254.7" r="0.9" fill="#5cb45c"/></g>
<g opacity="0.75"><path d="M1080.7 257.0 h15 M1093.2 257.0 v1.5 l-3 2 l5.5 2.8 l-5.5 2.8 l3 1.6 v1.6 M1090.0 269.4 h6.4" fill="none" stroke="#5cb45c" stroke-width="0.9"/><circle cx="1093.2" cy="257.0" r="0.9" fill="#5cb45c"/></g>
<g opacity="0.75"><path d="M997.5 292.5 h15 M1010.0 292.5 v1.5 l-3 2 l5.5 2.8 l-5.5 2.8 l3 1.6 v1.6 M1006.8 304.9 h6.4" fill="none" stroke="#5cb45c" stroke-width="0.9"/><circle cx="1010.0" cy="292.5" r="0.9" fill="#5cb45c"/></g>
<g opacity="0.75"><path d="M964.9 306.3 h15 M977.4 306.3 v1.5 l-3 2 l5.5 2.8 l-5.5 2.8 l3 1.6 v1.6 M974.2 318.7 h6.4" fill="none" stroke="#5cb45c" stroke-width="0.9"/><circle cx="977.4" cy="306.3" r="0.9" fill="#5cb45c"/></g>
<g opacity="0.75"><path d="M1083.5 308.4 h15 M1096.0 308.4 v1.5 l-3 2 l5.5 2.8 l-5.5 2.8 l3 1.6 v1.6 M1092.8 320.8 h6.4" fill="none" stroke="#5cb45c" stroke-width="0.9"/><circle cx="1096.0" cy="308.4" r="0.9" fill="#5cb45c"/></g>
<g opacity="0.75"><path d="M997.5 344.4 h15 M1010.0 344.4 v1.5 l-3 2 l5.5 2.8 l-5.5 2.8 l3 1.6 v1.6 M1006.8 356.8 h6.4" fill="none" stroke="#5cb45c" stroke-width="0.9"/><circle cx="1010.0" cy="344.4" r="0.9" fill="#5cb45c"/></g>
<g opacity="0.75"><path d="M964.9 357.7 h15 M977.4 357.7 v1.5 l-3 2 l5.5 2.8 l-5.5 2.8 l3 1.6 v1.6 M974.2 370.1 h6.4" fill="none" stroke="#5cb45c" stroke-width="0.9"/><circle cx="977.4" cy="357.7" r="0.9" fill="#5cb45c"/></g>
<g opacity="0.75"><path d="M965.0 408.8 h15 M977.5 408.8 v1.5 l-3 2 l5.5 2.8 l-5.5 2.8 l3 1.6 v1.6 M974.3 421.2 h6.4" fill="none" stroke="#5cb45c" stroke-width="0.9"/><circle cx="977.5" cy="408.8" r="0.9" fill="#5cb45c"/></g>
<g opacity="0.75"><path d="M965.0 460.0 h15 M977.5 460.0 v1.5 l-3 2 l5.5 2.8 l-5.5 2.8 l3 1.6 v1.6 M974.3 472.4 h6.4" fill="none" stroke="#5cb45c" stroke-width="0.9"/><circle cx="977.5" cy="460.0" r="0.9" fill="#5cb45c"/></g>
<g opacity="0.75"><path d="M965.0 511.7 h15 M977.5 511.7 v1.5 l-3 2 l5.5 2.8 l-5.5 2.8 l3 1.6 v1.6 M974.3 524.1 h6.4" fill="none" stroke="#5cb45c" stroke-width="0.9"/><circle cx="977.5" cy="511.7" r="0.9" fill="#5cb45c"/></g>
<g opacity="0.75"><path d="M1058.5 353.7 h15 M1071.0 353.7 v1.5 l-3 2 l5.5 2.8 l-5.5 2.8 l3 1.6 v1.6 M1067.8 366.1 h6.4" fill="none" stroke="#40e040" stroke-width="0.9"/><circle cx="1071.0" cy="353.7" r="0.9" fill="#40e040"/></g>
<g opacity="0.75"><path d="M1013.4 379.5 h15 M1025.9 379.5 v1.5 l-3 2 l5.5 2.8 l-5.5 2.8 l3 1.6 v1.6 M1022.7 391.9 h6.4" fill="none" stroke="#40e040" stroke-width="0.9"/><circle cx="1025.9" cy="379.5" r="0.9" fill="#40e040"/></g>
<circle cx="1004.1" cy="186.2" r="1.2" fill="#f01010"/>
<circle cx="1004.1" cy="388.2" r="1.2" fill="#f01010"/>
<circle cx="1004.1" cy="489.0" r="1.2" fill="#f01010"/>
<circle cx="1004.1" cy="589.3" r="1.2" fill="#f01010"/>
<circle cx="1004.1" cy="866.7" r="1.2" fill="#f01010"/>
<circle cx="299.6" cy="866.7" r="1.2" fill="#f01010"/>
<path d="M299.30 720.32 H375.00 M299.30 727.90 H375.00 M299.30 735.48 H375.00 M299.30 743.06 H375.00 M303.74 715.30 V816.30 M299.30 750.64 H375.00 M311.32 715.30 V816.30 M299.30 758.22 H375.00 M318.90 715.30 V816.30 M299.30 765.80 H375.00 M326.48 715.30 V816.30 M299.30 773.38 H375.00 M334.06 715.30 V816.30 M299.30 780.96 H375.00 M341.64 715.30 V816.30 M299.30 788.54 H375.00 M349.22 715.30 V816.30 M299.30 796.12 H375.00 M356.80 715.30 V816.30 M299.30 803.70 H375.00 M364.38 715.30 V816.30 M299.30 811.28 H375.00 M299.30 715.30 H375.00 V816.30 H299.30 Z" fill="none" stroke="#3c94e8" stroke-width="0.9" opacity="0.8"/>
<circle cx="274.0" cy="715.4" r="1.2" fill="#3c94e8"/>
<circle cx="274.0" cy="816.2" r="1.2" fill="#3c94e8"/>
<circle cx="299.3" cy="715.4" r="1.2" fill="#3c94e8"/>
<circle cx="299.3" cy="816.2" r="1.2" fill="#3c94e8"/>
<circle cx="375.0" cy="715.4" r="1.2" fill="#3c94e8"/>
<circle cx="375.0" cy="816.2" r="1.2" fill="#3c94e8"/>
<path d="M324.3 753 l3 9.5 l10 3.3 l-10 3.3 l-3 9.5 l-3 -9.5 l-10 -3.3 l10 -3.3 Z" fill="none" stroke="#f02020" stroke-width="1.1"/>
<rect x="318.7" y="760" width="11.6" height="12" fill="#8c5a4a"/>
<path d="M324.3 766.0 V787.0" stroke="#1ce41c" stroke-width="1.7"/><path d="M321.6 785.5 h5.4 l-2.7 6.5 Z" fill="#14b414"/><path d="M325.3 766.0 H345.3" stroke="#2222f0" stroke-width="1.5"/><path d="M344.0 766.0 l0 -2.5 l6.5 2.5 l-6.5 2.5 Z" fill="#1818f0"/><circle cx="324.3" cy="766.0" r="1.7" fill="#f00000"/><text x="357.9" y="769.4" font-size="11.5" fill="#3030e8" text-anchor="middle" font-style="italic">z</text><text x="324.3" y="804.6" font-size="11.5" fill="#24e024" text-anchor="middle" stroke="#24e024" stroke-width="0.25">y</text>
<text x="376.7" y="712" font-size="10.5" fill="#42a2ea" textLength="54.5" lengthAdjust="spacingAndGlyphs">⊺ 0.25 | 0.25</text>
<path d="M530.82 715.30 V816.30 M525.80 720.32 H626.80 M538.40 715.30 V816.30 M525.80 727.90 H626.80 M545.98 715.30 V816.30 M525.80 735.48 H626.80 M553.56 715.30 V816.30 M525.80 743.06 H626.80 M561.14 715.30 V816.30 M525.80 750.64 H626.80 M568.72 715.30 V816.30 M525.80 758.22 H626.80 M576.30 715.30 V816.30 M525.80 765.80 H626.80 M583.88 715.30 V816.30 M525.80 773.38 H626.80 M591.46 715.30 V816.30 M525.80 780.96 H626.80 M599.04 715.30 V816.30 M525.80 788.54 H626.80 M606.62 715.30 V816.30 M525.80 796.12 H626.80 M614.20 715.30 V816.30 M525.80 803.70 H626.80 M621.78 715.30 V816.30 M525.80 811.28 H626.80 M525.80 715.30 H626.80 V816.30 H525.80 Z" fill="none" stroke="#f5b534" stroke-width="0.9" opacity="0.8"/>
<circle cx="525.8" cy="715.4" r="1.5" fill="#f5b534"/>
<circle cx="626.8" cy="715.4" r="1.5" fill="#f5b534"/>
<circle cx="525.8" cy="816.2" r="1.5" fill="#f5b534"/>
<circle cx="626.8" cy="816.2" r="1.5" fill="#f5b534"/>
<path d="M576.3 753 l3.2 9.6 l10 3.2 l-10 3.2 l-3.2 9.6 l-3.2 -9.6 l-10 -3.2 l10 -3.2 Z" fill="#f5b534"/>
<rect x="570" y="759.8" width="12.5" height="12.4" fill="#8c5a4a"/>
<path d="M576.3 759 V773 M569 766 H583" stroke="#f5b534" stroke-width="1"/>
<path d="M576.3 778 V789" stroke="#40e040" stroke-width="1.3"/><path d="M573.8 786 h5 l-2.5 6 Z" fill="#28b028"/>
<text x="576.3" y="804.6" font-size="11.5" fill="#24e024" stroke="#24e024" stroke-width="0.25" text-anchor="middle">y</text>
<path d="M596 763.8 l5.5 2.2 l-5.5 2.2 Z" fill="#2020d0"/>
<text x="609.5" y="769.4" font-size="11.5" font-style="italic" fill="#3030e8" text-anchor="middle">z</text>
<text x="629" y="812.5" font-size="10.5" fill="#ece24a" textLength="54" lengthAdjust="spacingAndGlyphs">⊺ 0.25 | 0.25</text>
<path d="M640 762.8 L800 765 V758.8 L817.6 767.5 L800 776.7 V770.8 L640 768.8 Z" fill="#ff0000"/>
<rect x="821.3" y="760.0" width="12.8" height="12" fill="#8c5a4a"/>
<path d="M827.7 766.0 V787.0" stroke="#1ce41c" stroke-width="1.7"/><path d="M825.0 785.5 h5.4 l-2.7 6.5 Z" fill="#14b414"/><path d="M828.7 766.0 H848.7" stroke="#2222f0" stroke-width="1.5"/><path d="M847.4 766.0 l0 -2.5 l6.5 2.5 l-6.5 2.5 Z" fill="#1818f0"/><circle cx="827.7" cy="766.0" r="1.7" fill="#f00000"/><text x="861.3" y="769.4" font-size="11.5" fill="#3030e8" text-anchor="middle" font-style="italic">z</text><text x="827.7" y="804.6" font-size="11.5" fill="#24e024" text-anchor="middle" stroke="#24e024" stroke-width="0.25">y</text>
<rect x="972.6" y="760.0" width="12.8" height="12" fill="#8c5a4a"/>
<path d="M979.0 766.0 V787.0" stroke="#1ce41c" stroke-width="1.7"/><path d="M976.3 785.5 h5.4 l-2.7 6.5 Z" fill="#14b414"/><path d="M980.0 766.0 H1000.0" stroke="#2222f0" stroke-width="1.5"/><path d="M998.7 766.0 l0 -2.5 l6.5 2.5 l-6.5 2.5 Z" fill="#1818f0"/><circle cx="979.0" cy="766.0" r="1.7" fill="#f00000"/><text x="1012.6" y="769.4" font-size="11.5" fill="#3030e8" text-anchor="middle" font-style="italic">z</text><text x="979.0" y="804.6" font-size="11.5" fill="#24e024" text-anchor="middle" stroke="#24e024" stroke-width="0.25">y</text>
<rect x="960" y="558.5" width="19" height="12" fill="#858585"/>
<rect x="972.6" y="558.3" width="12.8" height="12" fill="#8c5a4a"/>
<path d="M979.0 564.3 V585.3" stroke="#1ce41c" stroke-width="1.7"/><path d="M976.3 583.8 h5.4 l-2.7 6.5 Z" fill="#14b414"/><path d="M980.0 564.3 H1000.0" stroke="#2222f0" stroke-width="1.5"/><path d="M998.7 564.3 l0 -2.5 l6.5 2.5 l-6.5 2.5 Z" fill="#1818f0"/><circle cx="979.0" cy="564.3" r="1.7" fill="#f00000"/><text x="1012.6" y="567.7" font-size="11.5" fill="#3030e8" text-anchor="middle" font-style="italic">z</text><text x="979.0" y="602.9" font-size="11.5" fill="#24e024" text-anchor="middle" stroke="#24e024" stroke-width="0.25">y</text>
<rect x="1098.4" y="138.4" width="68.4" height="68.4" rx="2" fill="#fff" stroke="#555" stroke-width="1.1"/>
<path d="M1115.7 138.4 V206.8 M1149.6 138.4 V206.8 M1098.4 155.7 H1166.8 M1098.4 189.6 H1166.8" stroke="#1e1e1e" stroke-width="1.7" fill="none"/>
<text x="1132.7" y="179.6" font-size="15.5" font-weight="bold" fill="#8a8af6" text-anchor="middle">+Z</text>
</svg>
<span class="t" style="left:1117.6px;top:865.0px;font-size:11.50px;color:#1a1a1a;letter-spacing:0.203px;">Dimensions [ft]</span>
<div class="r" style="left:0.0px;top:880.3px;width:1200.0px;height:21.7px;background:#f6f6f6;"></div>
<div class="r" style="left:410.5px;top:883.0px;width:34.0px;height:17.0px;background:#eaeaea;border:1px solid #dadada;"></div>
<div class="r" style="left:517.0px;top:883.0px;width:43.0px;height:17.0px;background:#eaeaea;border:1px solid #dadada;"></div>
<span class="t" style="left:414.0px;top:884.0px;font-size:10.50px;color:#1a1a1a;letter-spacing:-0.179px;transform:scaleX(0.9505);">SNAP</span>
<span class="t" style="left:450.0px;top:884.0px;font-size:10.50px;color:#1a1a1a;letter-spacing:-0.164px;transform:scaleX(0.9221);">GRID</span>
<span class="t" style="left:484.0px;top:884.0px;font-size:10.50px;color:#1a1a1a;letter-spacing:-0.160px;transform:scaleX(0.8949);">LGRID</span>
<span class="t" style="left:521.6px;top:884.0px;font-size:10.50px;color:#1a1a1a;letter-spacing:-0.184px;transform:scaleX(0.9709);">OSNAP</span>
<div class="r" style="left:641.0px;top:883.0px;width:1.0px;height:17.0px;background:#dedede;"></div>
<div class="r" style="left:745.0px;top:883.0px;width:1.0px;height:17.0px;background:#dedede;"></div>
<div class="r" style="left:899.5px;top:883.0px;width:1.0px;height:17.0px;background:#dedede;"></div>
<div class="r" style="left:963.8px;top:883.0px;width:1.0px;height:17.0px;background:#dedede;"></div>
<div class="r" style="left:1037.0px;top:883.0px;width:1.0px;height:17.0px;background:#dedede;"></div>
<div class="r" style="left:1111.6px;top:883.0px;width:1.0px;height:17.0px;background:#dedede;"></div>
<div class="r" style="left:1186.0px;top:883.0px;width:1.0px;height:17.0px;background:#dedede;"></div>
<span class="t" style="left:749.0px;top:884.5px;font-size:10.50px;color:#1a1a1a;letter-spacing:-0.132px;transform:scaleX(0.9328);">CS: Global XYZ</span>
<span class="t" style="left:902.7px;top:884.5px;font-size:10.50px;color:#1a1a1a;letter-spacing:-0.130px;transform:scaleX(0.9290);">Plane: XY</span>
<svg style="left:1188px;top:890px" width="10" height="10"><g fill="#b0b0b0"><rect x="7" y="1" width="1.5" height="1.5"/><rect x="4" y="4" width="1.5" height="1.5"/><rect x="7" y="4" width="1.5" height="1.5"/><rect x="1" y="7" width="1.5" height="1.5"/><rect x="4" y="7" width="1.5" height="1.5"/><rect x="7" y="7" width="1.5" height="1.5"/></g></svg>
<div class="r" style="left:211.0px;top:119.0px;width:749.3px;height:513.6px;background:#d3d3d8;border-radius:8px;box-shadow:0 22px 40px rgba(0,0,0,0.33),0 0 2px rgba(0,0,0,0.32);overflow:hidden;"></div>
<div class="r" style="left:211.0px;top:119.0px;width:749.3px;height:29.0px;background:#ffffff;border-radius:8px 8px 0 0;"></div>
<div class="r" style="left:211.0px;top:590.5px;width:749.3px;height:42.1px;background:#ffffff;border-radius:0 0 8px 8px;"></div>
<svg style="left:219px;top:125px" width="17" height="16" viewBox="0 0 17 16"><rect x="0" y="6.8" width="16" height="4.9" fill="#1a1a6a"/><rect x="0" y="13.2" width="16" height="1.9" fill="#1a1a6a"/><rect x="5.2" y="6.8" width="0.8" height="8.4" fill="#fff"/><path d="M1 11 L4.6 7.4" stroke="#c8c8e8" stroke-width="0.6"/><circle cx="3.2" cy="3.3" r="2.3" fill="#e4bc1c"/><path d="M3.8 2 Q2.4 2.4 2.6 4 Q3.4 3.2 3.9 4 Q3.6 4.9 2.8 4.4" stroke="#6a5a20" stroke-width="0.5" fill="none"/><rect x="7.6" y="1.5" width="7.7" height="7.2" fill="#fff" stroke="#f5d040" stroke-width="1.2"/><path d="M8.8 4.4 L12 2.8 L14 4.6 L12.6 7.8 L10 6.4 Z" fill="#5a7cc0"/><path d="M10 4.4 L12 3.6 L12.8 5" stroke="#a8c0e8" stroke-width="0.6" fill="none"/></svg>
<span class="t" style="left:240.0px;top:125.0px;font-size:12.60px;color:#111;letter-spacing:-0.114px;">Move/Copy</span>
<svg style="left:830px;top:122px" width="125" height="22" viewBox="0 0 125 22"><path d="M10.5 11.5 H21" stroke="#c4c4c4" stroke-width="1" fill="none"/><rect x="56.7" y="6.3" width="9" height="9" rx="1.2" fill="none" stroke="#111" stroke-width="1.2"/><path d="M102.3 6 L112.3 16 M112.3 6 L102.3 16" stroke="#111" stroke-width="1.2" fill="none"/></svg>
<div class="r" style="left:220.4px;top:177.4px;width:731.3px;height:404.6px;background:#ececec;"></div>
<div class="r" style="left:220.4px;top:157.2px;width:51.6px;height:20.8px;background:#ececec;"></div>
<div class="r" style="left:272.0px;top:158.8px;width:115.0px;height:18.6px;background:#e2e2e2;"></div>
<span class="t" style="left:234.7px;top:161.0px;font-size:10.80px;color:#1a1a1a;letter-spacing:-0.202px;">Main</span>
<span class="t" style="left:277.3px;top:161.0px;font-size:10.80px;color:#1a1a1a;letter-spacing:0.024px;">Numbering &amp; Options</span>
<div class="r" style="left:229.0px;top:186.0px;width:352.0px;height:71.0px;background:#ffffff;"></div>
<div class="r" style="left:229.0px;top:267.0px;width:352.0px;height:306.5px;background:#ffffff;"></div>
<div class="r" style="left:591.0px;top:186.0px;width:351.7px;height:387.5px;background:#ffffff;"></div>
<span class="t" style="left:234.7px;top:187.3px;font-size:10.80px;color:#4b5f8c;letter-spacing:-0.169px;transform:scaleX(0.9724);font-weight:bold;">Copy</span>
<span class="t" style="left:234.7px;top:267.7px;font-size:10.80px;color:#4b5f8c;letter-spacing:0.042px;font-weight:bold;">Move Direction</span>
<div class="r" style="left:234.3px;top:215.7px;width:13.4px;height:13.3px;background:#0f5fb8;border-radius:3px;"></div>
<svg style="left:234.3px;top:215.7px" width="14" height="14"><path d="M3.6 6.9 L5.9 9.2 L10.2 4.4" fill="none" stroke="#fff" stroke-width="1.1"/></svg>
<span class="t" style="left:253.3px;top:215.3px;font-size:10.60px;color:#1a1a1a;letter-spacing:-0.130px;transform:scaleX(0.9691);">Create copy</span>
<span class="t" style="left:420.0px;top:213.7px;font-size:10.60px;color:#1a1a1a;letter-spacing:-0.071px;">Number of steps</span>
<span class="t" style="left:420.0px;top:235.3px;font-size:10.60px;color:#1a1a1a;">n</span>
<div class="r" style="left:431.0px;top:233.7px;width:65.0px;height:17.0px;background:#e6e6f2;"></div>
<span class="t" style="left:473.3px;top:234.5px;font-size:10.60px;color:#1a1a1a;">1</span>
<span class="t" style="left:234.7px;top:294.3px;font-size:10.60px;color:#1a1a1a;letter-spacing:-0.140px;">Coordinate system</span>
<div class="r" style="left:234.3px;top:314.0px;width:175.4px;height:18.3px;background:#e6e6f2;"></div>
<div class="r" style="left:237.7px;top:317.7px;width:11.3px;height:11.0px;background:#d4f8f8;"></div>
<span class="t" style="left:255.0px;top:315.3px;font-size:10.60px;color:#1a1a1a;letter-spacing:-0.124px;transform:scaleX(0.9590);">1 - Global XYZ</span>
<div class="r" style="left:415.0px;top:314.0px;width:22.7px;height:18.3px;background:#cce4f7;"></div>
<div class="r" style="left:441.0px;top:314.0px;width:22.7px;height:18.3px;background:#cce4f7;"></div>
<span class="t" style="left:234.3px;top:359.3px;font-size:10.60px;color:#1a1a1a;letter-spacing:0.057px;">Direction through</span>
<div class="r" style="left:234.3px;top:379.3px;width:175.4px;height:18.0px;background:#e6e6f2;"></div>
<span class="t" style="left:237.7px;top:381.0px;font-size:10.60px;color:#1a1a1a;letter-spacing:-0.107px;">Displacement vector</span>
<span class="t" style="left:234.3px;top:424.7px;font-size:10.60px;color:#1a1a1a;letter-spacing:-0.107px;">Displacement vector</span>
<span class="t" style="left:234.3px;top:446.3px;font-size:10.60px;color:#1a1a1a;">X</span>
<div class="r" style="left:254.0px;top:444.7px;width:90.0px;height:17.6px;background:#e6e6f2;"></div>
<span class="t" style="left:292.0px;top:446.0px;font-size:10.60px;color:#1a1a1a;letter-spacing:-0.133px;transform:scaleX(0.9641);">16.40</span>
<span class="t" style="left:350.0px;top:446.3px;font-size:10.60px;color:#1a1a1a;letter-spacing:0.130px;">[ft]</span>
<span class="t" style="left:234.3px;top:470.0px;font-size:10.60px;color:#1a1a1a;">Y</span>
<div class="r" style="left:254.0px;top:468.7px;width:90.0px;height:17.3px;background:#e6e6f2;"></div>
<span class="t" style="left:297.5px;top:469.7px;font-size:10.60px;color:#1a1a1a;letter-spacing:-0.129px;transform:scaleX(0.9641);">0.00</span>
<span class="t" style="left:350.0px;top:470.0px;font-size:10.60px;color:#1a1a1a;letter-spacing:0.130px;">[ft]</span>
<span class="t" style="left:234.3px;top:494.0px;font-size:10.60px;color:#1a1a1a;">Z</span>
<div class="r" style="left:254.0px;top:492.7px;width:90.0px;height:17.3px;background:#e6e6f2;"></div>
<span class="t" style="left:297.5px;top:493.7px;font-size:10.60px;color:#1a1a1a;letter-spacing:-0.129px;transform:scaleX(0.9641);">0.00</span>
<span class="t" style="left:350.0px;top:494.0px;font-size:10.60px;color:#1a1a1a;letter-spacing:0.130px;">[ft]</span>
<div class="r" style="left:415.0px;top:444.3px;width:22.7px;height:18.4px;background:#cce4f7;"></div>
<span class="t" style="left:234.3px;top:527.7px;font-size:10.60px;color:#1a1a1a;letter-spacing:-0.272px;">Spacing</span>
<div class="r" style="left:234.3px;top:547.3px;width:89.7px;height:17.4px;background:#e6e6f2;"></div>
<span class="t" style="left:257.3px;top:548.3px;font-size:10.60px;color:#1a1a1a;letter-spacing:-0.133px;transform:scaleX(0.9666);">16.40</span>
<span class="t" style="left:330.0px;top:548.3px;font-size:10.60px;color:#1a1a1a;letter-spacing:0.130px;">[ft]</span>
<div class="r" style="left:395.3px;top:550.0px;width:13.4px;height:12.6px;background:#fafafa;border:1px solid #cfcfcf;border-radius:3px;"></div>
<span class="t" style="left:414.0px;top:548.5px;font-size:10.60px;color:#8a8a8a;letter-spacing:-0.112px;transform:scaleX(0.9482);">Total</span>
<div class="r" style="left:596.7px;top:550.7px;width:22.0px;height:18.0px;background:#e0e0e0;"></div>
<div class="r" style="left:220.7px;top:601.0px;width:22.0px;height:18.3px;background:#cce4f7;"></div>
<div class="r" style="left:253.3px;top:601.0px;width:22.4px;height:18.3px;background:#cce4f7;"></div>
<div class="r" style="left:688.3px;top:601.7px;width:81.4px;height:21.0px;background:#fdfdfd;border:1px solid #d6d6d6;border-bottom-color:#c2c2c2;border-radius:4px;"></div>
<span class="t" style="left:721.7px;top:604.7px;font-size:10.80px;color:#1a1a1a;letter-spacing:-0.195px;transform:scaleX(0.9596);">OK</span>
<div class="r" style="left:779.0px;top:601.7px;width:81.0px;height:21.0px;background:#fdfdfd;border:1px solid #d6d6d6;border-bottom-color:#c2c2c2;border-radius:4px;"></div>
<span class="t" style="left:804.3px;top:604.7px;font-size:10.80px;color:#1a1a1a;letter-spacing:-0.140px;transform:scaleX(0.9366);">Cancel</span>
<div class="r" style="left:869.7px;top:601.7px;width:81.3px;height:21.0px;background:#fdfdfd;border:1px solid #d6d6d6;border-bottom-color:#c2c2c2;border-radius:4px;"></div>
<span class="t" style="left:897.0px;top:604.7px;font-size:10.80px;color:#1a1a1a;letter-spacing:0.057px;">Apply</span>
<span class="t" style="left:595.0px;top:188.7px;font-size:10.60px;color:#1a1a1a;letter-spacing:-0.146px;">Coordinate System &#x27;1 - Global XYZ&#x27;</span>
<span class="t" style="left:595.0px;top:202.0px;font-size:10.60px;color:#1a1a1a;letter-spacing:-0.058px;">Direction Through &#x27;Displacement Vector&#x27;</span>
<svg style="left:0;top:0" width="1200" height="902" viewBox="0 0 1200 902">
<path d="M324.7 450.9 l2 -2.6 l2 2.6 Z" fill="#333"/><path d="M324.7 456.1 l2 2.6 l2 -2.6 Z" fill="#333"/>
<path d="M336.8 449.9 l4.6 3.6 l-4.6 3.6 Z" fill="#222"/>
<path d="M324.7 474.6 l2 -2.6 l2 2.6 Z" fill="#333"/><path d="M324.7 479.8 l2 2.6 l2 -2.6 Z" fill="#333"/>
<path d="M336.8 473.6 l4.6 3.6 l-4.6 3.6 Z" fill="#222"/>
<path d="M324.7 498.6 l2 -2.6 l2 2.6 Z" fill="#333"/><path d="M324.7 503.8 l2 2.6 l2 -2.6 Z" fill="#333"/>
<path d="M336.8 497.6 l4.6 3.6 l-4.6 3.6 Z" fill="#222"/>
<path d="M288.5 553.5 l4.2 4.2 l4.2 -4.2" fill="none" stroke="#444" stroke-width="1"/>
<path d="M304.7 553.2 l2 -2.6 l2 2.6 Z" fill="#333"/><path d="M304.7 558.4 l2 2.6 l2 -2.6 Z" fill="#333"/>
<path d="M317.3 552.2 l4.6 3.6 l-4.6 3.6 Z" fill="#222"/>
<path d="M486.3 239.6 l2 -2.6 l2 2.6 Z" fill="#333"/><path d="M486.3 244.8 l2 2.6 l2 -2.6 Z" fill="#333"/>
<path d="M397.5 320.7 l4.2 4.2 l4.2 -4.2" fill="none" stroke="#444" stroke-width="1"/>
<path d="M397.5 386.0 l4.2 4.2 l4.2 -4.2" fill="none" stroke="#444" stroke-width="1"/>
<g transform="translate(415,314)"><rect x="8" y="7" width="10.5" height="9" fill="#fff" stroke="#444" stroke-width="1"/><rect x="8" y="7" width="10.5" height="2.4" fill="#3a5aa8"/><path d="M7 1.5 l1.2 3 l3.2 -0.8 l-2 2.5 l2 2.5 l-3.2 -0.8 l-1.2 3 l-1.2 -3 l-3.2 0.8 l2 -2.5 l-2 -2.5 l3.2 0.8 Z" fill="#f5e820" stroke="#b8a010" stroke-width="0.4"/></g>
<g transform="translate(441,314)"><rect x="4" y="7" width="10.5" height="9" fill="#fff" stroke="#444" stroke-width="1"/><rect x="4" y="7" width="10.5" height="2.4" fill="#777"/><path d="M8 5 Q11 1.5 15 3 L18 5.5 L15 8 L10 7.5 Z" fill="#e8b890" stroke="#a06840" stroke-width="0.5"/><path d="M14 3 l4 -1 v4 Z" fill="#3a6ac8"/></g>
<g transform="translate(415,444.3)"><path d="M7.5 2 l5 5 M12.5 2 l-5 5" stroke="#e01818" stroke-width="1.3"/><path d="M11 5.5 v9 l2.2 -2 l1.6 3.6 l1.6 -0.8 l-1.6 -3.4 h3 Z" fill="#fff" stroke="#444" stroke-width="0.7"/><text x="3" y="16" font-size="6.5" font-weight="bold" fill="#222">2x</text></g>
<g transform="translate(596.7,550.7)" opacity="0.75"><rect x="3" y="3" width="9" height="8" fill="#aaa"/><rect x="9" y="9" width="8" height="7" fill="#888"/><path d="M11 12 l4 0 l-1 3" stroke="#444" fill="none" stroke-width="0.8"/></g>
<g transform="translate(220.7,601)"><rect x="3.5" y="2.5" width="15" height="4" fill="#58b048"/><path d="M6 2.5 v2 M9 2.5 v2 M12 2.5 v2 M15 2.5 v2" stroke="#d8f0d0" stroke-width="0.7"/><text x="2.8" y="15.5" font-size="9.5" font-weight="bold" fill="#1a1a4a" textLength="16.5" lengthAdjust="spacingAndGlyphs">0,00</text><path d="M9.5 17 H19" stroke="#2a3a9a" stroke-width="1"/></g>
<g transform="translate(253.3,601)"><ellipse cx="7.5" cy="3.5" rx="4" ry="1.5" fill="#666"/><path d="M3.5 5.3 h8 M3.5 7.3 h8 M3.5 9.3 h8" stroke="#666" stroke-width="1.2"/><path d="M5 11.5 q0 4 5 4 M8.5 13.7 l2 1.8 l-2 1.6" fill="none" stroke="#444" stroke-width="1"/><path d="M12.5 7.5 h5 l2 2 v8 h-7 Z" fill="#fff" stroke="#444" stroke-width="0.8"/><path d="M14 11 h4 M14 13 h4 M14 15 h4" stroke="#666" stroke-width="0.7"/></g>
<g fill="#b4b4b4" transform="translate(2.2,1)"><rect x="955" y="624" width="1.3" height="1.3"/><rect x="952.5" y="626.5" width="1.3" height="1.3"/><rect x="955" y="626.5" width="1.3" height="1.3"/><rect x="950" y="629" width="1.3" height="1.3"/><rect x="952.5" y="629" width="1.3" height="1.3"/></g>
<path d="M648.4 232.6 L664 234.8" stroke="#e04820" stroke-width="1"/><path d="M669.5 235.6 l-6 1.2 l0.6 -3.6 Z" fill="#e04820"/>
<path d="M648.4 232.6 L634 238.8" stroke="#28a848" stroke-width="1"/><path d="M628.6 241 l5 -4 l1.4 3.3 Z" fill="#28a848"/>
<path d="M648.4 232.6 V248" stroke="#2848d8" stroke-width="1"/><path d="M648.4 253.5 l-1.9 -6 h3.8 Z" fill="#2848d8"/>
<circle cx="648.4" cy="232.6" r="1.6" fill="#f5e020"/>
<text x="672" y="240.3" font-size="11" fill="#e04820">X</text>
<text x="620.5" y="246" font-size="11" fill="#28a848">Y</text>
<text x="645" y="263.5" font-size="11" fill="#2848d8">Z</text>
<g stroke="#6a6a7c" stroke-width="0.8" fill="none">
<path d="M718.3 238.3 L892 334.8"/><path d="M709.4 253.9 L795.6 301.8"/>
<path d="M718.3 238.3 L693.5 282.3"/><path d="M798.5 298 L792.5 309"/><path d="M895 330.5 L880.7 357.8"/>
</g>
<circle cx="718.3" cy="238.3" r="1.6" fill="#6a6a7c"/><circle cx="709.4" cy="253.9" r="1.6" fill="#6a6a7c"/>
<path d="M892 334.8 l-6.2 -0.8 l2 -3.6 Z" fill="#6a6a7c"/><path d="M795.6 301.8 l-6.2 -0.8 l2 -3.6 Z" fill="#6a6a7c"/>
<text transform="translate(751,271.5) rotate(29)" font-size="11.5" font-style="italic" fill="#6a6a7c">Δ</text>
<text transform="translate(801,280.8) rotate(29)" font-size="11.5" font-style="italic" fill="#6a6a7c">n·Δ</text>
<path d="M685.3 298.2 L715.8 371.3 L672.9 395.4 L642.8 322.3 Z" fill="#dcdce2" stroke="#d6b420" stroke-width="1.8" stroke-linejoin="round"/>
<path d="M685.3 298.2 L715.8 371.3 L672.9 395.4 L642.8 322.3 Z" fill="none" stroke="#6e5c10" stroke-width="0.5"/>
<path d="M772.6 346.6 L803.1 419.7 L760.2 443.8 L730.1 370.7 Z" fill="#dcdce2" stroke="#585868" stroke-width="1.3" stroke-linejoin="round"/>
<path d="M859.9 394.9 L890.4 468.0 L847.5 492.1 L817.4 419.0 Z" fill="#dcdce2" stroke="#585868" stroke-width="1.3" stroke-linejoin="round"/>
<g stroke="#6c6c74" stroke-width="1.35" stroke-dasharray="0.1 4.3" stroke-linecap="round" fill="none">
<path d="M685.3 298.2 L859.9 394.9"/>
<path d="M642.8 322.3 L817.4 419.0"/>
<path d="M672.9 395.4 L847.5 492.1"/>
<path d="M715.8 371.3 L890.4 468.0"/>
</g>
<path d="M688.3 298.7 L785.3 314.6" stroke="#e04820" stroke-width="1.4" stroke-dasharray="8 4.5" fill="none"/>
<path d="M790.8 315.4 l-6.8 2.4 l1 -6.4 Z" fill="#e04820"/>
<circle cx="685.3" cy="298.2" r="1.7" fill="#e04820"/>
<circle cx="792.9" cy="316.0" r="1.6" fill="#28a848"/>
<path d="M790.3 318.7 L779.3 323.7" stroke="#28a848" stroke-width="1.4"/>
<path d="M774.3 325.7 l6.5 -5 l1.5 4.6 Z" fill="#28a848"/>
<path d="M772.6 324.6 V331.1" stroke="#2848d8" stroke-width="1.4"/>
<circle cx="772.6" cy="324.1" r="1.5" fill="#2848d8"/>
<path d="M772.6 344.6 l-3 -6.5 h6 Z" fill="#2848d8"/>
<text x="734.3" y="302.7" font-size="10.5" fill="#e04820">d<tspan font-size="8" dy="2">x</tspan></text>
<text x="784.3" y="327.7" font-size="10.5" fill="#28a848">d<tspan font-size="8" dy="2">y</tspan></text>
<text x="775.1" y="337.6" font-size="10.5" fill="#2848d8">d<tspan font-size="8" dy="2">z</tspan></text>
<path d="M775.6 347.1 L872.6 362.9" stroke="#e04820" stroke-width="1.4" stroke-dasharray="8 4.5" fill="none"/>
<path d="M878.1 363.8 l-6.8 2.4 l1 -6.4 Z" fill="#e04820"/>
<circle cx="772.6" cy="346.6" r="1.7" fill="#e04820"/>
<circle cx="880.2" cy="364.4" r="1.6" fill="#28a848"/>
<path d="M877.6 367.1 L866.6 372.1" stroke="#28a848" stroke-width="1.4"/>
<path d="M861.6 374.1 l6.5 -5 l1.5 4.6 Z" fill="#28a848"/>
<path d="M859.9 372.9 V379.4" stroke="#2848d8" stroke-width="1.4"/>
<circle cx="859.9" cy="372.4" r="1.5" fill="#2848d8"/>
<path d="M859.9 392.9 l-3 -6.5 h6 Z" fill="#2848d8"/>
<text x="821.6" y="351.1" font-size="10.5" fill="#e04820">d<tspan font-size="8" dy="2">x</tspan></text>
<text x="871.6" y="376.1" font-size="10.5" fill="#28a848">d<tspan font-size="8" dy="2">y</tspan></text>
<text x="862.4" y="385.9" font-size="10.5" fill="#2848d8">d<tspan font-size="8" dy="2">z</tspan></text>
</svg>
<svg style="left:0;top:0" width="1200" height="902" viewBox="0 0 1200 902"><path d="M0 0 H1200 V902 H0 Z M1.8 8.5 V892.6 A8 8 0 0 0 9.8 900.6 H1191.1 A8 8 0 0 0 1199.1 892.6 V8.5 A8 8 0 0 0 1191.1 0.5 H9.8 A8 8 0 0 0 1.8 8.5 Z" fill="#e3e3e3" fill-rule="evenodd"/><rect x="1.8" y="0.5" width="1197.3" height="900.1" rx="8" fill="none" stroke="#8c8c8c" stroke-width="1.1"/></svg>
</body></html>
